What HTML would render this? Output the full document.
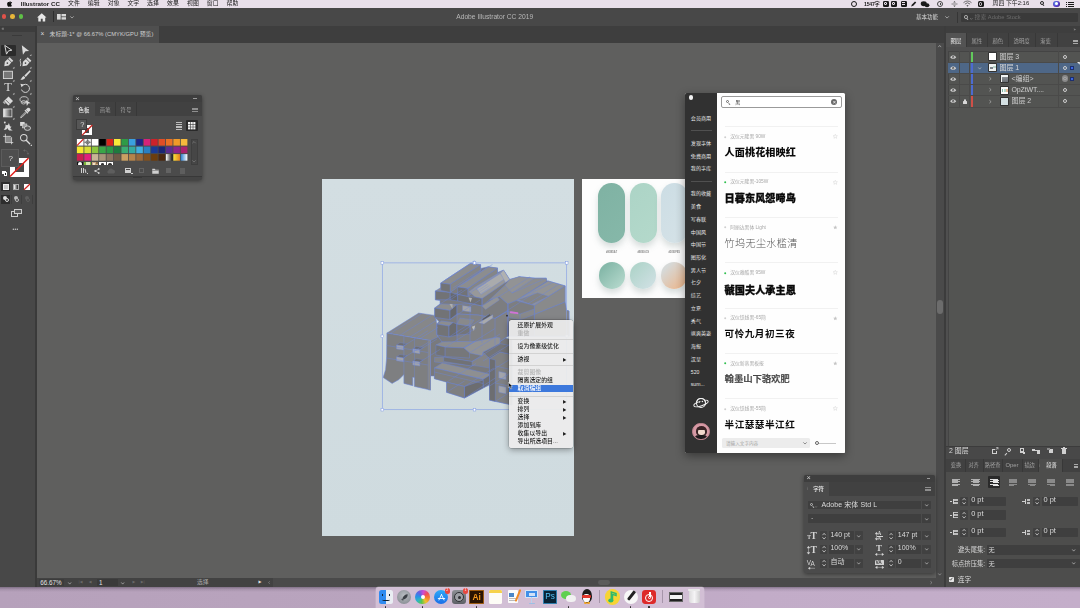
<!DOCTYPE html>
<html lang="zh"><head><meta charset="utf-8"><title>Adobe Illustrator CC 2019</title>
<style>
*{box-sizing:border-box;margin:0;padding:0}
html,body{width:1080px;height:608px;overflow:hidden;background:#5f5f5e}
body{position:relative;font-family:"Liberation Sans","Noto Sans CJK SC",sans-serif;color:#ddd;font-size:6px;line-height:1}
#root{position:absolute;left:0;top:0;width:1080px;height:608px;overflow:hidden;filter:blur(0.5px)}
.a{position:absolute}
.t{position:absolute;white-space:nowrap}
svg{position:absolute;overflow:visible}
</style></head><body><div id="root">

<!-- s_frame -->
<div class="a" style="left:36px;top:42.6px;width:900px;height:536px;background:#5f5f5e;"></div>
<div class="a" style="left:322px;top:179px;width:252px;height:357px;background:linear-gradient(180deg,#d3dee2,#cfdbdf);"></div>
<div class="a" style="left:0px;top:587px;width:1080px;height:21px;background:linear-gradient(90deg,#b6a1bb,#b9a4be 35%,#c2acc8 70%,#c4aeca);"></div>
<div class="a" style="left:0px;top:587px;width:1080px;height:5px;background:linear-gradient(180deg,rgba(40,30,48,.38),rgba(40,30,48,.12) 45%,rgba(40,30,48,0));"></div>
<div class="a" style="left:0px;top:0px;width:1080px;height:7.6px;background:#e9e0ea;"></div>
<svg class="a" style="left:6.5px;top:0.6px" width="5" height="6" viewBox="0 0 20 24"><path fill="#111" d="M14.5 0c.2 1.500-.5 3-1.400 4-.9 1.100-2.400 1.900-3.800 1.800-.2-1.500.6-3 1.400-3.900C11.600.8 13.200.1 14.500 0zM19 8.200c-.2.100-2.500 1.500-2.500 4.400 0 3.400 3 4.600 3.100 4.600 0 .1-.5 1.700-1.600 3.300-1 1.400-2 2.800-3.600 2.800s-2-.9-3.800-.9c-1.700 0-2.400 1-3.800 1-1.500 0-2.500-1.300-3.700-2.900C1.700 18.400.5 15.100.5 12c0-5 3.300-7.600 6.400-7.600 1.700 0 3.100 1.100 4.100 1.100 1 0 2.600-1.200 4.500-1.200.7 0 3.300.1 5 2.500z"/></svg>
<div class="t" style="left:20.7px;top:0.28px;font-size:6.2px;line-height:7.44px;color:#1a1a1a;font-weight:700;">Illustrator CC</div>
<div class="t" style="left:68px;top:0.36px;font-size:5.9px;line-height:7.08px;color:#1a1a1a;">文件</div>
<div class="t" style="left:87.8px;top:0.36px;font-size:5.9px;line-height:7.08px;color:#1a1a1a;">编辑</div>
<div class="t" style="left:107.8px;top:0.36px;font-size:5.9px;line-height:7.08px;color:#1a1a1a;">对象</div>
<div class="t" style="left:127.4px;top:0.36px;font-size:5.9px;line-height:7.08px;color:#1a1a1a;">文字</div>
<div class="t" style="left:147px;top:0.36px;font-size:5.9px;line-height:7.08px;color:#1a1a1a;">选择</div>
<div class="t" style="left:167px;top:0.36px;font-size:5.9px;line-height:7.08px;color:#1a1a1a;">效果</div>
<div class="t" style="left:187px;top:0.36px;font-size:5.9px;line-height:7.08px;color:#1a1a1a;">视图</div>
<div class="t" style="left:206.8px;top:0.36px;font-size:5.9px;line-height:7.08px;color:#1a1a1a;">窗口</div>
<div class="t" style="left:226.6px;top:0.36px;font-size:5.9px;line-height:7.08px;color:#1a1a1a;">帮助</div>
<div class="a" style="left:850.5px;top:0.9px;width:6px;height:6px;border-radius:50%;border:1.6px solid #1a1a1a"></div>
<div class="t" style="left:864px;top:0.88px;font-size:5.2px;line-height:6.24px;color:#1a1a1a;font-weight:700;letter-spacing:-0.25px">1547字</div>
<div class="a" style="left:882.6px;top:0.8px;width:6px;height:6.2px;background:#1a1a1a;border-radius:1.3px"><div class="a" style="left:1.7px;top:1.5px;width:2.6px;height:3.2px;border:0.8px solid #e9e0ea;border-radius:1px"></div></div>
<div class="a" style="left:890.6px;top:0.8px;width:6px;height:6.2px;background:#1a1a1a;border-radius:1.3px"><div class="a" style="left:1.7px;top:1.5px;width:2.6px;height:3.2px;border:0.8px solid #e9e0ea;border-radius:1px"></div></div>
<div class="a" style="left:900.5px;top:0.8px;width:6px;height:6.2px;background:#1a1a1a;border-radius:1.3px"><div class="a" style="left:1.2px;top:1.4px;width:3.6px;height:1px;background:#e9e0ea"></div><div class="a" style="left:1.2px;top:3.4px;width:3.6px;height:1px;background:#e9e0ea"></div></div>
<svg class="a" style="left:910px;top:0.8px" width="7" height="6" viewBox="0 0 14 12"><path d="M2 11 L4 7 L10 1 L12.500 3 L6.500 9.500z" fill="#1a1a1a"/></svg>
<svg class="a" style="left:920px;top:0.6px" width="10" height="7" viewBox="0 0 20 14"><ellipse cx="7.500" cy="5.500" rx="6" ry="4.800" fill="#1a1a1a"/><ellipse cx="14" cy="8.500" rx="4.800" ry="3.800" fill="#1a1a1a"/></svg>
<div class="a" style="left:936.8px;top:0.9px;width:6.2px;height:6.2px;border-radius:50%;border:0.9px solid #444"><div class="a" style="left:1.9px;top:0.7px;width:0.8px;height:2.2px;background:#444"></div><div class="a" style="left:1.9px;top:2.4px;width:1.8px;height:0.8px;background:#444"></div></div>
<svg class="a" style="left:951px;top:0.8px" width="7" height="6" viewBox="0 0 14 12"><path d="M7 0 L9.500 3 H4.500z M7 12 L4.500 9 H9.500z" fill="#555"/><rect x="1" y="5.300" width="12" height="1.400" fill="#555"/></svg>
<svg class="a" style="left:962.500px;top:1px" width="9" height="6" viewBox="0 0 18 12"><path d="M9 11.500 L6.800 9 A3.200 3.200 0 0 1 11.200 9z" fill="#555"/><path d="M3.800 6.200 A7.300 7.300 0 0 1 14.200 6.200" fill="none" stroke="#555" stroke-width="1.700"/><path d="M1 3.400 A11.200 11.200 0 0 1 17 3.400" fill="none" stroke="#555" stroke-width="1.700"/></svg>
<div class="a" style="left:977.8px;top:0.8px;width:6.4px;height:6.2px;background:#1a1a1a;border-radius:1.5px"><div class="a" style="left:1.7px;top:1.3px;width:3px;height:3.600px;border:0.9px solid #e9e0ea;border-radius:1.5px"></div></div>
<div class="t" style="left:992.5px;top:0.46px;font-size:5.9px;line-height:7.08px;color:#1a1a1a;">周四 下午2:16</div>
<div class="a" style="left:1039.5px;top:1px;width:4.2px;height:4.2px;border-radius:50%;border:0.9px solid #222"></div>
<div class="a" style="left:1043px;top:4.3px;width:2.4px;height:0.9px;background:#222;transform:rotate(45deg);transform-origin:0 0"></div>
<div class="a" style="left:1053.3px;top:0.6px;width:6.6px;height:6.6px;background:radial-gradient(circle at 40% 40%,#4fb4f0,#5b36c9 55%,#1c1442);border-radius:50%"><div class="a" style="left:1.8px;top:1.8px;width:3px;height:3px;border-radius:50%;background:#fff"></div></div>
<div class="a" style="left:1067.6px;top:1.5px;width:6.4px;height:0.9px;background:#1a1a1a;"></div>
<div class="a" style="left:1065.6px;top:1.5px;width:1px;height:0.9px;background:#1a1a1a;"></div>
<div class="a" style="left:1067.6px;top:3.5px;width:6.4px;height:0.9px;background:#1a1a1a;"></div>
<div class="a" style="left:1065.6px;top:3.5px;width:1px;height:0.9px;background:#1a1a1a;"></div>
<div class="a" style="left:1067.6px;top:5.5px;width:6.4px;height:0.9px;background:#1a1a1a;"></div>
<div class="a" style="left:1065.6px;top:5.5px;width:1px;height:0.9px;background:#1a1a1a;"></div>
<div class="a" style="left:0px;top:7.6px;width:1080px;height:18.6px;background:#484848;"></div>
<div class="a" style="left:1.7999999999999998px;top:14px;width:4.6px;height:4.6px;background:#e0524a;border-radius:50%"></div>
<div class="a" style="left:10.100000000000001px;top:14px;width:4.6px;height:4.6px;background:#e8b63a;border-radius:50%"></div>
<div class="a" style="left:18.7px;top:14px;width:4.6px;height:4.6px;background:#5fc047;border-radius:50%"></div>
<svg class="a" style="left:37px;top:13.200px" width="9.500" height="8.500" viewBox="0 0 19 17"><path d="M9.500 0.500 L0 9 H2.600 V17 H7.600 V11.500 H11.400 V17 H16.400 V9 H19z" fill="#e6e6e6"/></svg>
<div class="a" style="left:53.3px;top:11px;width:0.6px;height:11px;background:#2e2e2e;"></div>
<svg class="a" style="left:57px;top:14.200px" width="9" height="5.600" viewBox="0 0 18 11.200"><rect x="0" y="0" width="7.400" height="11.200" fill="#d8d8d8"/><rect x="9" y="0" width="9" height="4.800" fill="#d8d8d8"/><rect x="9" y="6.400" width="9" height="4.800" fill="#d8d8d8"/></svg>
<svg class="a" style="left:70.300px;top:15.600px" width="4" height="2.600" viewBox="0 0 8 5"><path d="M0.600 0.600 L4 4 L7.400 0.600" fill="none" stroke="#ccc" stroke-width="1.300"/></svg>
<div class="t" style="left:494.7px;top:13.18px;font-size:6.7px;line-height:8.04px;color:#b8b8b8;transform:translateX(-50%);">Adobe Illustrator CC 2019</div>
<div class="t" style="left:916px;top:13.9px;font-size:5.5px;line-height:6.6px;color:#d8d8d8;">基本功能</div>
<svg class="a" style="left:944.500px;top:16.200px" width="4.200" height="2.600" viewBox="0 0 8 5"><path d="M0.600 0.600 L4 4 L7.400 0.600" fill="none" stroke="#ccc" stroke-width="1.300"/></svg>
<div class="a" style="left:956.6px;top:11.5px;width:0.6px;height:11px;background:#363636;"></div>
<div class="a" style="left:961px;top:13.2px;width:117.4px;height:8.8px;background:#3a3a3a;border-radius:1px"></div>
<div class="a" style="left:964.2px;top:15.2px;width:3.6px;height:3.6px;border-radius:50%;border:0.8px solid #bbb"></div>
<div class="a" style="left:967.2px;top:18.2px;width:2.2px;height:0.8px;background:#bbb;transform:rotate(45deg);transform-origin:0 0"></div>
<svg class="a" style="left:970px;top:17.600px" width="2.600" height="1.800" viewBox="0 0 8 5"><path d="M0.600 0.600 L4 4 L7.400 0.600" fill="none" stroke="#aaa" stroke-width="1.500"/></svg>
<div class="t" style="left:974.6px;top:13.92px;font-size:5.8px;line-height:6.96px;color:#6c6c6c;">搜索 Adobe Stock</div>
<div class="a" style="left:0px;top:26.2px;width:946px;height:16.4px;background:#3e3e3e;"></div>
<div class="a" style="left:37px;top:26.2px;width:121.5px;height:16.4px;background:#4f4f4f;"></div>
<div class="t" style="left:40.6px;top:30.44px;font-size:6.6px;line-height:7.92px;color:#ddd;">×</div>
<div class="t" style="left:49.6px;top:31.12px;font-size:5.8px;line-height:6.96px;color:#cfcfcf;letter-spacing:0.02px">未标题-1* @ 66.67% (CMYK/GPU 预览)</div>
<!-- s_tools -->
<div class="a" style="left:0px;top:26.2px;width:36.4px;height:560.6px;background:#484848;"></div>
<div class="a" style="left:35.4px;top:26.2px;width:1.2px;height:560.6px;background:#3a3a3a;"></div>
<div class="a" style="left:0px;top:26.2px;width:35.4px;height:6px;background:#3d3d3d;"></div>
<div class="t" style="left:1.6px;top:26.44px;font-size:4.6px;line-height:5.52px;color:#aaa;letter-spacing:-0.6px">‹‹</div>
<div class="a" style="left:11.8px;top:35.4px;width:10px;height:1px;background:#3a3a3a;"></div>
<div class="a" style="left:1px;top:44.6px;width:14.8px;height:11px;background:#2b2b2b;border-radius:1px"></div>
<svg class="a" style="left:2.1000000000000005px;top:43.8px" width="12.4" height="12.4" viewBox="0 0 22 22"><path d="M5 2.500 L17.500 11 L11.500 12.200 L8 18z" fill="none" stroke="#dadada" stroke-width="1.700" stroke-linejoin="round"/></svg>
<svg class="a" style="left:19.0px;top:43.8px" width="12.4" height="12.4" viewBox="0 0 22 22"><path d="M5 2 L18 12.500 L11.500 13 L7 19z" fill="#dadada"/><path d="M22 21 h-3 l3 -3z" fill="#ddd"/></svg>
<svg class="a" style="left:2.1000000000000005px;top:56.4px" width="12.4" height="12.4" viewBox="0 0 22 22"><path d="M13.500 2 L20 8.500 L17.500 11 L11 4.500z" fill="#dadada"/><path d="M10.300 5.500 L16.500 11.700 L12 17 L4 18 L5 10z" fill="#dadada"/><circle cx="9.500" cy="12.500" r="1.500" fill="#484848"/><path d="M22 22 h-3 l3 -3z" fill="#ddd"/></svg>
<svg class="a" style="left:19.0px;top:56.4px" width="12.4" height="12.4" viewBox="0 0 22 22"><g transform="translate(2,0)"><path d="M13.500 2 L20 8.500 L17.500 11 L11 4.500z" fill="#dadada"/><path d="M10.300 5.500 L16.500 11.700 L12 17 L4 18 L5 10z" fill="#dadada"/><circle cx="9.500" cy="12.500" r="1.500" fill="#484848"/></g><path d="M3 5 C0 9 5 12 2.500 18" fill="none" stroke="#dadada" stroke-width="1.500"/><path d="M22 22 h-3 l3 -3z" fill="#ddd"/></svg>
<svg class="a" style="left:2.1000000000000005px;top:69.1px" width="12.4" height="12.4" viewBox="0 0 22 22"><rect x="2.500" y="4" width="16" height="13" fill="#777" stroke="#dadada" stroke-width="1.600"/><path d="M22 22 h-3 l3 -3z" fill="#ddd"/></svg>
<svg class="a" style="left:19.0px;top:69.1px" width="12.4" height="12.4" viewBox="0 0 22 22"><path d="M19 2 L21 4 L12 14 L9.500 11.500z" fill="#dadada"/><path d="M8.500 12.500 L11 15 C9.500 19 5 19.500 2.500 19 C5 17.500 5 14 8.500 12.500z" fill="#dadada"/><path d="M22 22 h-3 l3 -3z" fill="#ddd"/></svg>
<div class="t" style="left:8.0px;top:80.4px;font-size:12.5px;line-height:15.0px;color:#dadada;transform:translateX(-50%);font-family:'Liberation Serif',serif;font-weight:400">T</div>
<svg class="a" style="left:2.1000000000000005px;top:81.89999999999999px" width="12.4" height="12.4" viewBox="0 0 22 22"><path d="M22 22 h-3 l3 -3z" fill="#ddd"/></svg>
<svg class="a" style="left:19.0px;top:81.89999999999999px" width="12.4" height="12.4" viewBox="0 0 22 22"><path d="M6 6.500 A7.200 7.200 0 1 1 4.500 13.500" fill="none" stroke="#dadada" stroke-width="1.700"/><path d="M2.500 3 L9 4.500 L4.500 9.500z" fill="#dadada"/><path d="M22 22 h-3 l3 -3z" fill="#ddd"/></svg>
<svg class="a" style="left:2.1000000000000005px;top:94.8px" width="12.4" height="12.4" viewBox="0 0 22 22"><path d="M11.500 2.500 L19.500 10.500 L11.500 18.500 L3.500 10.500z" fill="#dadada"/><path d="M3.500 10.500 L7 14 L4.700 16.300 L1.200 12.800z" fill="#aaa"/><path d="M6.500 8.500 L13.500 15.500" stroke="#484848" stroke-width="1.200"/><path d="M22 22 h-3 l3 -3z" fill="#ddd"/></svg>
<svg class="a" style="left:19.0px;top:94.8px" width="12.4" height="12.4" viewBox="0 0 22 22"><ellipse cx="9" cy="8" rx="7.200" ry="5" fill="none" stroke="#dadada" stroke-width="1.500"/><ellipse cx="8" cy="13" rx="4" ry="3" fill="none" stroke="#dadada" stroke-width="1.400"/><path d="M12 9 L21 14.500 L16.500 15.200 L14 19.500z" fill="#dadada"/></svg>
<svg class="a" style="left:2.1000000000000005px;top:107.3px" width="12.4" height="12.4" viewBox="0 0 22 22"><defs><linearGradient id="tg"><stop offset="0" stop-color="#f4f4f4"/><stop offset="1" stop-color="#3a3a3a"/></linearGradient></defs><rect x="2.500" y="3.500" width="15" height="14" fill="url(#tg)" stroke="#dadada" stroke-width="1.500"/><path d="M22 22 h-3 l3 -3z" fill="#ddd"/></svg>
<svg class="a" style="left:19.0px;top:107.3px" width="12.4" height="12.4" viewBox="0 0 22 22"><path d="M15.500 1.500 C18 0 21.500 3.500 20 6 L16.500 9.500 L12 5z" fill="#dadada"/><path d="M10.500 5.500 L16 11" stroke="#dadada" stroke-width="2.200"/><path d="M12.500 8 L4 16.500 L3 19 L5.500 18 L14 9.500" fill="none" stroke="#dadada" stroke-width="1.500"/></svg>
<svg class="a" style="left:2.1000000000000005px;top:120.0px" width="12.4" height="12.4" viewBox="0 0 22 22"><path d="M3 17 C6 15 7 11 6 8 C9 11 12 9 12 5 C14 9 13 12 17 12 C14 14 14 17 19 18 C13 20 10 17 10 14 C8 17 6 18 3 17z" fill="#dadada"/><circle cx="5" cy="4.500" r="1.700" fill="#dadada"/></svg>
<svg class="a" style="left:19.0px;top:120.0px" width="12.4" height="12.4" viewBox="0 0 22 22"><rect x="2" y="3.500" width="8" height="7" fill="#dadada"/><rect x="6" y="7" width="8" height="7" fill="#9a9a9a" stroke="#dadada" stroke-width="1"/><ellipse cx="15" cy="14.500" rx="5.500" ry="4" fill="#5a5a5a" stroke="#dadada" stroke-width="1.500"/></svg>
<svg class="a" style="left:2.1000000000000005px;top:132.60000000000002px" width="12.4" height="12.4" viewBox="0 0 22 22"><path d="M6 1.500 V17 H20" fill="none" stroke="#dadada" stroke-width="1.500"/><path d="M2 6 H15 L17 8 V20" fill="none" stroke="#dadada" stroke-width="1.500"/><path d="M7 7 H14.500 L16 8.500 V16 H7z" fill="#8a8a8a"/></svg>
<svg class="a" style="left:19.0px;top:132.60000000000002px" width="12.4" height="12.4" viewBox="0 0 22 22"><circle cx="8.500" cy="8.500" r="5.800" fill="none" stroke="#dadada" stroke-width="1.800"/><path d="M12.800 12.800 L19 19" stroke="#dadada" stroke-width="2.400" stroke-linecap="round"/><path d="M23 23 h-3 l3 -3z" fill="#ddd"/></svg>
<div class="a" style="left:10.4px;top:158.2px;width:18.6px;height:18.6px;background:#fff;"><div class="a" style="left:5px;top:5px;width:8.600px;height:8.600px;background:#484848"></div></div>
<svg class="a" style="left:10.400px;top:158.200px" width="18.600" height="18.600" viewBox="0 0 18.600 18.600"><path d="M0 18.600 L18.600 0" stroke="#e0211d" stroke-width="1.500"/></svg>
<div class="a" style="left:1.2px;top:149.4px;width:18px;height:18px;background:#4e4e4e;border:0.6px solid #5c5c5c"><div class="t" style="left:6.400px;top:4.600px;font-size:8px;color:#ddd">?</div></div>
<svg class="a" style="left:23px;top:149px" width="6" height="6" viewBox="0 0 12 12"><path d="M2 3 C7 2 10 5 10 10" fill="none" stroke="#666" stroke-width="1.200"/><path d="M0 3 L4 0.500 V5.500z M10 12 L7.500 8 H12.500z" fill="#666"/></svg>
<div class="a" style="left:2.2px;top:170.6px;width:3.4px;height:3.4px;background:#fff;"></div>
<div class="a" style="left:3.8px;top:172.2px;width:3.6px;height:3.6px;background:#222;border:0.6px solid #fff"></div>
<div class="a" style="left:1.2px;top:182.2px;width:9px;height:9px;background:#2d2d2d;"></div>
<div class="a" style="left:2.8px;top:183.8px;width:5.8px;height:5.8px;background:#c8c8c8;border:0.5px solid #eee"></div>
<div class="a" style="left:13.4px;top:183.8px;width:5.8px;height:5.8px;background:linear-gradient(90deg,#fff,#222);border:0.5px solid #aaa"></div>
<div class="a" style="left:23.8px;top:183.8px;width:6px;height:5.8px;background:#fff;"></div>
<svg class="a" style="left:23.800px;top:183.800px" width="6" height="5.800" viewBox="0 0 6 5.800"><path d="M0 5.800 L6 0" stroke="#d0211d" stroke-width="1.200"/></svg>
<div class="a" style="left:1.2px;top:194.6px;width:9px;height:9px;background:#2d2d2d;"></div>
<div class="a" style="left:3px;top:196.4px;width:4px;height:4px;border-radius:50%;background:#ddd"></div>
<div class="a" style="left:4.6px;top:198px;width:4px;height:4px;border-radius:50%;border:0.7px solid #ddd;background:#2d2d2d"></div>
<div class="a" style="left:13.8px;top:196.4px;width:4px;height:4px;border-radius:50%;background:#bbb"></div>
<div class="a" style="left:15.4px;top:198px;width:4px;height:4px;border-radius:50%;border:0.7px solid #bbb;background:#484848"></div>
<div class="a" style="left:24.6px;top:196.4px;width:4px;height:4px;border-radius:50%;background:#5e5e5e"></div>
<div class="a" style="left:26.200000000000003px;top:198px;width:4px;height:4px;border-radius:50%;border:0.7px solid #5e5e5e;background:#484848"></div>
<div class="a" style="left:10.8px;top:194.6px;width:0.5px;height:9px;background:#3e3e3e;"></div>
<div class="a" style="left:21.4px;top:194.6px;width:0.5px;height:9px;background:#3e3e3e;"></div>
<div class="a" style="left:32px;top:194.6px;width:0.5px;height:9px;background:#3e3e3e;"></div>
<div class="a" style="left:10.6px;top:211.2px;width:7.6px;height:5.6px;background:#484848;border:0.8px solid #ccc"></div>
<div class="a" style="left:14px;top:208.6px;width:8px;height:5.8px;background:#5a5a5a;border:0.8px solid #ccc"></div>
<div class="t" style="left:15.5px;top:226.84px;font-size:4.6px;line-height:5.52px;color:#d0d0d0;transform:translateX(-50%);letter-spacing:0.4px">•••</div>
<!-- s_swatch -->
<div class="a" style="left:73.2px;top:95.2px;width:128.8px;height:85.2px;background:#4b4b4b;border-radius:2px;box-shadow:0 1px 4px rgba(0,0,0,.45)"></div>
<div class="a" style="left:73.2px;top:95.2px;width:128.8px;height:6.8px;background:#3e3e3e;border-radius:2px 2px 0 0"></div>
<div class="t" style="left:75.2px;top:93.84px;font-size:7.6px;line-height:9.12px;color:#cfcfcf;">×</div>
<div class="a" style="left:193.4px;top:98.2px;width:3.4px;height:0.9px;background:#9a9a9a;"></div>
<div class="a" style="left:73.2px;top:102px;width:128.8px;height:13.8px;background:#414141;"></div>
<div class="a" style="left:73.2px;top:102px;width:21.4px;height:13.8px;background:#4b4b4b;"></div>
<div class="a" style="left:115.4px;top:102px;width:0.6px;height:13.8px;background:#383838;"></div>
<div class="a" style="left:136px;top:102px;width:0.6px;height:13.8px;background:#383838;"></div>
<div class="t" style="left:84px;top:106.76px;font-size:5.4px;line-height:6.48px;color:#e8e8e8;font-weight:500;transform:translateX(-50%);">色板</div>
<div class="t" style="left:105.2px;top:106.76px;font-size:5.4px;line-height:6.48px;color:#9c9c9c;transform:translateX(-50%);">画笔</div>
<div class="t" style="left:126px;top:106.76px;font-size:5.4px;line-height:6.48px;color:#9c9c9c;transform:translateX(-50%);">符号</div>
<div class="a" style="left:192.4px;top:107.6px;width:5.2px;height:0.8px;background:#8e8e8e;"></div>
<div class="a" style="left:192.4px;top:109.1px;width:5.2px;height:0.8px;background:#8e8e8e;"></div>
<div class="a" style="left:192.4px;top:110.6px;width:5.2px;height:0.8px;background:#8e8e8e;"></div>
<div class="a" style="left:81.8px;top:125px;width:10.4px;height:10.4px;background:#fff;"><div class="a" style="left:2.800px;top:2.800px;width:4.800px;height:4.800px;background:#4b4b4b"></div></div>
<svg class="a" style="left:81.800px;top:125px" width="10.400" height="10.400" viewBox="0 0 10.400 10.400"><path d="M0 10.400 L10.400 0" stroke="#c8221c" stroke-width="1.300"/></svg>
<div class="a" style="left:76.4px;top:119.4px;width:10.6px;height:10.2px;background:#565656;border:0.6px solid #3c3c3c"><div class="t" style="left:2.800px;top:0.800px;font-size:7.400px;color:#ddd">?</div></div>
<div class="a" style="left:176px;top:122.4px;width:6.4px;height:0.9px;background:#bdbdbd;"></div>
<div class="a" style="left:176px;top:124.0px;width:6.4px;height:0.9px;background:#bdbdbd;"></div>
<div class="a" style="left:176px;top:125.60000000000001px;width:6.4px;height:0.9px;background:#bdbdbd;"></div>
<div class="a" style="left:176px;top:127.2px;width:6.4px;height:0.9px;background:#bdbdbd;"></div>
<div class="a" style="left:176px;top:128.8px;width:6.4px;height:0.9px;background:#bdbdbd;"></div>
<div class="a" style="left:186px;top:120.4px;width:11.6px;height:10.8px;background:#2a2a2a;border-radius:1px"></div>
<svg class="a" style="left:188.200px;top:122.200px" width="7.400" height="7.400" viewBox="0 0 14 14"><rect x="0" y="0" width="4" height="4" fill="#f2f2f2"/><rect x="5" y="0" width="4" height="4" fill="#f2f2f2"/><rect x="10" y="0" width="4" height="4" fill="#f2f2f2"/><rect x="0" y="5" width="4" height="4" fill="#f2f2f2"/><rect x="5" y="5" width="4" height="4" fill="#f2f2f2"/><rect x="10" y="5" width="4" height="4" fill="#f2f2f2"/><rect x="0" y="10" width="4" height="4" fill="#f2f2f2"/><rect x="5" y="10" width="4" height="4" fill="#f2f2f2"/><rect x="10" y="10" width="4" height="4" fill="#f2f2f2"/></svg>
<svg class="a" style="left:0;top:0" width="1080" height="608" viewBox="0 0 1080 608"><defs><linearGradient id="sg1"><stop offset="0" stop-color="#fff"/><stop offset="1" stop-color="#111"/></linearGradient><linearGradient id="sg2"><stop offset="0" stop-color="#f8e23a"/><stop offset="1" stop-color="#e8821e"/></linearGradient><linearGradient id="sg3"><stop offset="0" stop-color="#2b7fd0"/><stop offset="1" stop-color="#fff"/></linearGradient></defs><rect x="76.9" y="139" width="6.6" height="6.6" fill="#fff"/><path d="M76.9 145.6 L83.5 139" stroke="#d0211d" stroke-width="1.100"/><rect x="84.32" y="139" width="6.6" height="6.6" fill="#f2f2f2"/><circle cx="87.62" cy="142.3" r="1.700" fill="none" stroke="#555" stroke-width="0.800"/><path d="M87.62 139 V145.6 M84.32 142.3 H90.91999999999999" stroke="#555" stroke-width="0.700"/><rect x="91.74" y="139" width="6.6" height="6.6" fill="#ffffff"/><rect x="99.16" y="139" width="6.6" height="6.6" fill="#000000"/><rect x="106.58" y="139" width="6.6" height="6.6" fill="#d9261c"/><rect x="114.0" y="139" width="6.6" height="6.6" fill="#f8ea3a"/><rect x="121.42" y="139" width="6.6" height="6.6" fill="#2e9b47"/><rect x="128.84" y="139" width="6.6" height="6.6" fill="#3a9fe0"/><rect x="136.26" y="139" width="6.6" height="6.6" fill="#1c2587"/><rect x="143.68" y="139" width="6.6" height="6.6" fill="#d4237a"/><rect x="151.1" y="139" width="6.6" height="6.6" fill="#cc2229"/><rect x="158.52" y="139" width="6.6" height="6.6" fill="#e04e26"/><rect x="165.94" y="139" width="6.6" height="6.6" fill="#ea7125"/><rect x="173.36" y="139" width="6.6" height="6.6" fill="#f09a28"/><rect x="180.78" y="139" width="6.6" height="6.6" fill="#f5b83c"/><rect x="76.9" y="146.6" width="6.6" height="6.6" fill="#f5e830"/><rect x="84.32" y="146.6" width="6.6" height="6.6" fill="#d8dc34"/><rect x="91.74" y="146.6" width="6.6" height="6.6" fill="#8cc63f"/><rect x="99.16" y="146.6" width="6.6" height="6.6" fill="#3aa648"/><rect x="106.58" y="146.6" width="6.6" height="6.6" fill="#2c9845"/><rect x="114.0" y="146.6" width="6.6" height="6.6" fill="#1f7a3e"/><rect x="121.42" y="146.6" width="6.6" height="6.6" fill="#3aad73"/><rect x="128.84" y="146.6" width="6.6" height="6.6" fill="#35a9a0"/><rect x="136.26" y="146.6" width="6.6" height="6.6" fill="#42aee0"/><rect x="143.68" y="146.6" width="6.6" height="6.6" fill="#2a7fc2"/><rect x="151.1" y="146.6" width="6.6" height="6.6" fill="#1a3a93"/><rect x="158.52" y="146.6" width="6.6" height="6.6" fill="#1b2674"/><rect x="165.94" y="146.6" width="6.6" height="6.6" fill="#5b2d8e"/><rect x="173.36" y="146.6" width="6.6" height="6.6" fill="#8d2489"/><rect x="180.78" y="146.6" width="6.6" height="6.6" fill="#a8226e"/><rect x="76.9" y="154.1" width="6.6" height="6.6" fill="#c9204f"/><rect x="84.32" y="154.1" width="6.6" height="6.6" fill="#e0207c"/><rect x="91.74" y="154.1" width="6.6" height="6.6" fill="#c8b596"/><rect x="99.16" y="154.1" width="6.6" height="6.6" fill="#a89579"/><rect x="106.58" y="154.1" width="6.6" height="6.6" fill="#8a7560"/><rect x="114.0" y="154.1" width="6.6" height="6.6" fill="#6e5a47"/><rect x="121.42" y="154.1" width="6.6" height="6.6" fill="#c9a063"/><rect x="128.84" y="154.1" width="6.6" height="6.6" fill="#b5834a"/><rect x="136.26" y="154.1" width="6.6" height="6.6" fill="#99683a"/><rect x="143.68" y="154.1" width="6.6" height="6.6" fill="#81501f"/><rect x="151.1" y="154.1" width="6.6" height="6.6" fill="#6b3d0d"/><rect x="158.52" y="154.1" width="6.6" height="6.6" fill="#4a2810"/><rect x="165.94" y="154.1" width="6.6" height="6.6" fill="url(#sg1)"/><rect x="173.36" y="154.1" width="6.6" height="6.6" fill="url(#sg2)"/><rect x="180.78" y="154.1" width="6.6" height="6.6" fill="url(#sg3)"/></svg>
<div class="a" style="left:76.9px;top:161.6px;width:6.6px;height:3.4px;background:#111;overflow:hidden"><div class="a" style="left:1.400px;top:0.800px;width:4px;height:4px;border-radius:50%;background:#fff"></div></div>
<div class="a" style="left:84.32px;top:161.6px;width:6.6px;height:3.4px;background:#7db53c;overflow:hidden"><div class="a" style="left:1.400px;top:0.900px;width:4px;height:3px;background:#d8e8b0"></div></div>
<div class="a" style="left:91.74px;top:161.6px;width:6.6px;height:3.4px;background:#c8a780;overflow:hidden"><div class="a" style="left:1px;top:1px;width:2px;height:2px;background:#efe0c8"></div><div class="a" style="left:4px;top:0.300px;width:2px;height:2px;background:#8a6a48"></div></div>
<div class="a" style="left:99.16px;top:161.6px;width:6.6px;height:3.4px;background:#fff;overflow:hidden"><div class="a" style="left:1.700px;top:1.200px;width:3.300px;height:3px;border-radius:50% 50% 0 0;background:#333"></div></div>
<div class="a" style="left:106.58px;top:161.6px;width:6.6px;height:3.4px;background:#fff;overflow:hidden"><div class="a" style="left:1.700px;top:1.200px;width:3.300px;height:3px;border-radius:50% 50% 0 0;background:#333"></div></div>
<div class="a" style="left:190.6px;top:139px;width:7px;height:26px;background:#464646;border:0.5px solid #3e3e3e"></div>
<svg class="a" style="left:192.200px;top:141px" width="4" height="2.600" viewBox="0 0 8 5"><path d="M0.600 4.400 L4 1 L7.400 4.400" fill="none" stroke="#8a8a8a" stroke-width="1.200"/></svg>
<svg class="a" style="left:192.200px;top:160.400px" width="4" height="2.600" viewBox="0 0 8 5"><path d="M0.600 0.600 L4 4 L7.400 0.600" fill="none" stroke="#8a8a8a" stroke-width="1.200"/></svg>
<div class="a" style="left:80.8px;top:168px;width:1.4px;height:5px;background:#d0d0d0;"></div>
<div class="a" style="left:82.8px;top:168px;width:1.4px;height:5px;background:#d0d0d0;"></div>
<div class="a" style="left:84.6px;top:168.6px;width:1.3px;height:4.4px;background:#d0d0d0;transform:rotate(-14deg)"></div>
<div class="a" style="left:86.8px;top:173px;width:1.2px;height:1.2px;background:#d0d0d0;"></div>
<svg class="a" style="left:94px;top:167.600px" width="6" height="6" viewBox="0 0 12 12"><path d="M9.500 2 L3 6 L9.500 10" fill="none" stroke="#d0d0d0" stroke-width="1.400"/><circle cx="9.500" cy="2" r="1.800" fill="#d0d0d0"/><circle cx="2.500" cy="6" r="1.800" fill="#d0d0d0"/><circle cx="9.500" cy="10" r="1.800" fill="#d0d0d0"/></svg>
<svg class="a" style="left:106px;top:167.600px" width="10" height="6" viewBox="0 0 20 12"><path d="M5 11 A3.500 3.500 0 0 1 5 4.500 A5 5 0 0 1 14 3.500 A4 4 0 0 1 16 11z" fill="#5e5e5e"/></svg>
<div class="a" style="left:125px;top:167.8px;width:5.6px;height:5.4px;background:#d0d0d0;"><div class="a" style="left:0.800px;top:0.800px;width:1.800px;height:1.600px;background:#4b4b4b"></div><div class="a" style="left:3.200px;top:0.800px;width:1.600px;height:1.600px;background:#4b4b4b"></div></div>
<div class="a" style="left:131.4px;top:173px;width:1.2px;height:1.2px;background:#d0d0d0;"></div>
<div class="a" style="left:138.6px;top:168px;width:5px;height:5.4px;border:0.8px solid #636363"></div>
<svg class="a" style="left:151.600px;top:167.600px" width="7" height="6" viewBox="0 0 14 12"><path d="M0.500 1.500 H5.500 L7 3.500 H13.500 V11.500 H0.500z" fill="#d0d0d0"/><path d="M0.500 5 H13.500" stroke="#4b4b4b" stroke-width="0.900"/></svg>
<div class="a" style="left:166.4px;top:168px;width:4.6px;height:5px;background:#636363;"></div>
<div class="a" style="left:180.4px;top:168.8px;width:4.4px;height:4.8px;background:#5e5e5e;"></div>
<div class="a" style="left:179.8px;top:167.6px;width:5.6px;height:0.9px;background:#5e5e5e;"></div>
<div class="a" style="left:73.2px;top:175.6px;width:128.8px;height:4.8px;background:#444;border-radius:0 0 2px 2px;border-top:0.6px solid #383838"></div>
<div class="a" style="left:133px;top:176.6px;width:9px;height:1px;background:#383838;"></div>
<!-- s_art -->
<svg class="a" style="left:0;top:0;filter:blur(0.350px)" width="1080" height="608" viewBox="0 0 1080 608">
<polygon points="386.9,333.1 418.7,313.1 435,315.4 437,324 437,335 442,342 430.5,340.5" fill="#868789" stroke="#6a84dc" stroke-width="0.6" stroke-opacity="0.8" stroke-linejoin="round"/>
<polygon points="430.5,340.5 442,335 500,336 512,340 512,405 489.5,400.1 489.5,385.1 483.1,388 464.5,398 446.6,392.3 446.6,381.5 434.4,378.7 434.4,376 430.5,376" fill="#797a7d" stroke="#6a84dc" stroke-width="0.6" stroke-opacity="0.8" stroke-linejoin="round"/>
<polygon points="435.4,291 440.8,290 440.8,283 470.5,263.4 480.6,264.7 480.6,268.5 488,266.8 497.5,268.1 497.5,272.5 503.5,270.1 509.6,279.5 519,276.8 534.3,278.2 546.2,278.2 546.9,281 548.3,281 565.1,285.9 565.1,302 566.5,310.3 569,311 569,336 508,336 495,345 442,342 437,335 437,324 439,321.5 434.7,317.4 434.7,308 440,304 440,300.5 435.4,299.8" fill="#7b7c7f" stroke="#6a84dc" stroke-width="0.7" stroke-opacity="0.8" stroke-linejoin="round"/>
<polygon points="435.4,291 440.8,287.6 455,288.6 450.2,292.4" fill="#8c8d8f" stroke="#6a84dc" stroke-width="0.6" stroke-opacity="0.8" stroke-linejoin="round"/>
<polygon points="435.4,291 450.2,292.4 450.2,299.8 435.4,299.8" fill="#727376" stroke="#6a84dc" stroke-width="0.6" stroke-opacity="0.8" stroke-linejoin="round"/>
<polygon points="450.2,292.4 457.7,294.4 457.7,301 450.2,299.8" fill="#68696c" stroke="#6a84dc" stroke-width="0.6" stroke-opacity="0.8" stroke-linejoin="round"/>
<polygon points="434.7,308 440.8,303.9 457,304.5 450,310.5" fill="#8c8d8f" stroke="#6a84dc" stroke-width="0.6" stroke-opacity="0.8" stroke-linejoin="round"/>
<polygon points="434.7,308 450,310.5 450,319.5 434.7,317.4" fill="#727376" stroke="#6a84dc" stroke-width="0.6" stroke-opacity="0.8" stroke-linejoin="round"/>
<polygon points="450,310.5 457,304.5 457,314 450,319.5" fill="#67686b" stroke="#6a84dc" stroke-width="0.6" stroke-opacity="0.8" stroke-linejoin="round"/>
<polygon points="437,324 441.5,321 453,322.5 449,326" fill="#8c8d8f" stroke="#6a84dc" stroke-width="0.6" stroke-opacity="0.8" stroke-linejoin="round"/>
<polygon points="437,324 449,326 449,337 437,335" fill="#727376" stroke="#6a84dc" stroke-width="0.6" stroke-opacity="0.8" stroke-linejoin="round"/>
<polygon points="449,326 453,322.5 457,324 457,335 449,337" fill="#6b6c6f" stroke="#6a84dc" stroke-width="0.6" stroke-opacity="0.8" stroke-linejoin="round"/>
<polygon points="440.8,283 470.5,263.4 480.6,264.7 450.2,284.3" fill="#8c8d8f" stroke="#6a84dc" stroke-width="0.6" stroke-opacity="0.8" stroke-linejoin="round"/>
<polygon points="450.2,284.3 480.6,264.7 480.6,270.8 450.2,292.4" fill="#848587" stroke="#6a84dc" stroke-width="0.6" stroke-opacity="0.8" stroke-linejoin="round"/>
<polygon points="440.8,283 450.2,284.3 450.2,292.4 440.8,290.5" fill="#727376" stroke="#6a84dc" stroke-width="0.6" stroke-opacity="0.8" stroke-linejoin="round"/>
<polygon points="457.7,287 488,266.8 497.5,268.1 467.8,288.4" fill="#8c8d8f" stroke="#6a84dc" stroke-width="0.6" stroke-opacity="0.8" stroke-linejoin="round"/>
<polygon points="467.8,288.4 497.5,268.1 497.5,275 467.8,296.5" fill="#848587" stroke="#6a84dc" stroke-width="0.6" stroke-opacity="0.8" stroke-linejoin="round"/>
<polygon points="457.7,287 467.8,288.4 467.8,296.5 457.7,294.4" fill="#727376" stroke="#6a84dc" stroke-width="0.6" stroke-opacity="0.8" stroke-linejoin="round"/>
<polygon points="469.1,291.7 475.2,287 503.5,270.1 509.6,279.5 482,298.5 475.2,297.1" fill="#97989a" stroke="#6a84dc" stroke-width="0.6" stroke-opacity="0.8" stroke-linejoin="round"/>
<polygon points="476.5,288.5 500.5,273.5 504.5,279 481,294.5" fill="#aaabac" stroke="#6a84dc" stroke-width="0.4" stroke-opacity="0.8" stroke-linejoin="round"/>
<line x1="476.0" y1="289.5" x2="486.0" y2="283.0" stroke="#6a84dc" stroke-width="0.35" opacity="0.8"/>
<line x1="477.7" y1="290.8" x2="487.7" y2="284.3" stroke="#6a84dc" stroke-width="0.35" opacity="0.8"/>
<line x1="479.4" y1="292.1" x2="489.4" y2="285.6" stroke="#6a84dc" stroke-width="0.35" opacity="0.8"/>
<line x1="481.1" y1="293.4" x2="491.1" y2="286.9" stroke="#6a84dc" stroke-width="0.35" opacity="0.8"/>
<polygon points="500.5,273.5 503.5,270.1 509.6,279.5 505.5,282.5" fill="#b0b1b1" stroke="#6a84dc" stroke-width="0.4" stroke-opacity="0.8" stroke-linejoin="round"/>
<polygon points="457.7,294.4 467.8,296.5 475.2,297.1 482,298.5 482,306 470,303.5 457.7,301" fill="#717275" stroke="#6a84dc" stroke-width="0.6" stroke-opacity="0.8" stroke-linejoin="round"/>
<polygon points="457,304.5 470,303.5 482,306 489.4,300 499.4,296.4 508,304 508,311 495,318.5 478,315 457,314" fill="#7c7d80" stroke="#6a84dc" stroke-width="0.6" stroke-opacity="0.8" stroke-linejoin="round"/>
<polygon points="462.5,305.5 471,306.8 471,312 462.5,310.7" fill="#a4a5a7" stroke="#6a84dc" stroke-width="0.4" stroke-opacity="0.8" stroke-linejoin="round"/>
<polygon points="468.5,297.5 472,298 470.5,302.5" fill="#b2b3b3"/>
<polygon points="449.5,304 452.5,304 452.5,309" fill="#aeafb0"/>
<polygon points="482,306 497,296.5 499.4,300 485.5,309.5" fill="#939496" stroke="#6a84dc" stroke-width="0.4" stroke-opacity="0.8" stroke-linejoin="round"/>
<polygon points="457,314 478,315 495,318.5 508,311 508,336 495,345 457,341.5" fill="#808184" stroke="#6a84dc" stroke-width="0.6" stroke-opacity="0.8" stroke-linejoin="round"/>
<polygon points="482,319.4 489.4,314 490.7,315.4 483.3,321.2" fill="#5a5c5f"/>
<polygon points="478.6,322.8 492.8,314.7 492.8,318 484,324.1" fill="#a9aaab" stroke="#6a84dc" stroke-width="0.4" stroke-opacity="0.8" stroke-linejoin="round"/>
<polygon points="471.8,326.8 475.2,325.5 473.9,330.9" fill="#bebfbf"/>
<polygon points="457,324 470,326 470,334 457,335" fill="#747578" stroke="#6a84dc" stroke-width="0.5" stroke-opacity="0.8" stroke-linejoin="round"/>
<polygon points="460,318 474,320 470,326 457,324" fill="#88898b" stroke="#6a84dc" stroke-width="0.5" stroke-opacity="0.8" stroke-linejoin="round"/>
<polygon points="489.4,300 505,285.2 519,276.8 534.3,278.2 546.2,278.2 546.9,281 516.2,300.6 508,304 499.4,296.4" fill="#8c8d8f" stroke="#6a84dc" stroke-width="0.6" stroke-opacity="0.8" stroke-linejoin="round"/>
<polygon points="509.6,279.5 519,276.8 534.3,278.2 512,293 505,285.2" fill="#929395" stroke="#6a84dc" stroke-width="0.5" stroke-opacity="0.8" stroke-linejoin="round"/>
<polygon points="516.2,300.6 548.3,281 565.1,285.9 534.3,305.5" fill="#939495" stroke="#6a84dc" stroke-width="0.6" stroke-opacity="0.8" stroke-linejoin="round"/>
<polygon points="518.5,299.8 537.5,292.8 548.5,296.3 531.5,304.6" fill="#838486" stroke="#6a84dc" stroke-width="0.5" stroke-opacity="0.8" stroke-linejoin="round"/>
<polygon points="534.3,305.5 565.1,285.9 565.1,302 534.3,314.5" fill="#898a8b" stroke="#6a84dc" stroke-width="0.6" stroke-opacity="0.8" stroke-linejoin="round"/>
<polygon points="534.3,314.5 565.1,302 566.5,310.3 569,311 569,336 534.3,336" fill="#848587" stroke="#6a84dc" stroke-width="0.6" stroke-opacity="0.8" stroke-linejoin="round"/>
<polygon points="508,304 516.2,300.6 534.3,305.5 534.3,336 508,336" fill="#7d7e80" stroke="#6a84dc" stroke-width="0.6" stroke-opacity="0.8" stroke-linejoin="round"/>
<polygon points="508,311 520,314 534.3,309 534.3,314.5 520,320 508,317" fill="#88898b" stroke="#6a84dc" stroke-width="0.5" stroke-opacity="0.8" stroke-linejoin="round"/>
<polygon points="386.9,333.1 430.5,340.5 430.5,390.1 414.3,386.4 414.3,377.5 412.8,377.3 412.8,385.7 403.9,383.4 403.9,374.6 399,379.5 392.1,383.4 383.2,377.5 385.6,369.5 386.6,358" fill="#7e7f81" stroke="#6a84dc" stroke-width="0.7" stroke-opacity="0.8" stroke-linejoin="round"/>
<polygon points="396.5,345 403.5,346.1 407.0,343.8 400.0,342.7" fill="#6e6f72" stroke="#6a84dc" stroke-width="0.4" stroke-opacity="0.8" stroke-linejoin="round"/>
<polygon points="396.5,345 403.5,346.1 403.5,350 396.5,348.9" fill="#a2a4ab" stroke="#6a84dc" stroke-width="0.5" stroke-opacity="0.8" stroke-linejoin="round"/>
<polygon points="412.8,348.7 419.8,349.8 423.3,347.5 416.3,346.4" fill="#6e6f72" stroke="#6a84dc" stroke-width="0.4" stroke-opacity="0.8" stroke-linejoin="round"/>
<polygon points="412.8,348.7 419.8,349.8 419.8,353.7 412.8,352.59999999999997" fill="#a2a4ab" stroke="#6a84dc" stroke-width="0.5" stroke-opacity="0.8" stroke-linejoin="round"/>
<polygon points="396.5,356.8 403.5,357.90000000000003 407.0,355.6 400.0,354.5" fill="#6e6f72" stroke="#6a84dc" stroke-width="0.4" stroke-opacity="0.8" stroke-linejoin="round"/>
<polygon points="396.5,356.8 403.5,357.90000000000003 403.5,361.8 396.5,360.7" fill="#a2a4ab" stroke="#6a84dc" stroke-width="0.5" stroke-opacity="0.8" stroke-linejoin="round"/>
<polygon points="412.8,361 419.8,362.1 423.3,359.8 416.3,358.7" fill="#6e6f72" stroke="#6a84dc" stroke-width="0.4" stroke-opacity="0.8" stroke-linejoin="round"/>
<polygon points="412.8,361 419.8,362.1 419.8,366 412.8,364.9" fill="#a2a4ab" stroke="#6a84dc" stroke-width="0.5" stroke-opacity="0.8" stroke-linejoin="round"/>
<polygon points="428,340.1 430.5,340.5 430.5,390.1 428,389.6" fill="#87888b" stroke="#6a84dc" stroke-width="0.3" stroke-opacity="0.8" stroke-linejoin="round"/>
<polygon points="442,342 457,341.5 475.2,341.5 463.8,347.9 445.2,347.2 435.9,345" fill="#8c8d8f" stroke="#6a84dc" stroke-width="0.5" stroke-opacity="0.8" stroke-linejoin="round"/>
<polygon points="463.8,347.9 475.2,341.5 496.7,337.2 500,338 500,343.6 483.1,352.2 482.4,355.8 469.5,352.9" fill="#929395" stroke="#6a84dc" stroke-width="0.6" stroke-opacity="0.8" stroke-linejoin="round"/>
<polygon points="435.9,345 445.2,347.2 445.2,356.5 435.9,355" fill="#727376" stroke="#6a84dc" stroke-width="0.5" stroke-opacity="0.8" stroke-linejoin="round"/>
<polygon points="445.2,347.2 463.8,347.9 469.5,352.9 469.5,358 445.2,356.5" fill="#76777a" stroke="#6a84dc" stroke-width="0.5" stroke-opacity="0.8" stroke-linejoin="round"/>
<polygon points="434.4,357.5 443.7,357 472,361.5 482.4,355.8 483.1,352.2 489.5,358.6 489.5,368 478,366 434.4,362" fill="#838487" stroke="#6a84dc" stroke-width="0.5" stroke-opacity="0.8" stroke-linejoin="round"/>
<polygon points="443.7,357 472,361.5 472,366 443.7,361.5" fill="#717275" stroke="#6a84dc" stroke-width="0.5" stroke-opacity="0.8" stroke-linejoin="round"/>
<polygon points="434.4,367.9 442.3,362.9 491,374.4 483.1,379.4" fill="#8e8f91" stroke="#6a84dc" stroke-width="0.6" stroke-opacity="0.8" stroke-linejoin="round"/>
<polygon points="434.4,367.9 483.1,379.4 483.1,388 464.5,386.5 446.6,382.2 434.4,378.7" fill="#7e7f81" stroke="#6a84dc" stroke-width="0.6" stroke-opacity="0.8" stroke-linejoin="round"/>
<polygon points="483.1,379.4 491,374.4 491,383 483.1,388" fill="#6e6f72" stroke="#6a84dc" stroke-width="0.5" stroke-opacity="0.8" stroke-linejoin="round"/>
<polygon points="446.6,382.2 464.5,386.5 464.5,398 446.6,392.3" fill="#7e7f81" stroke="#6a84dc" stroke-width="0.6" stroke-opacity="0.8" stroke-linejoin="round"/>
<polygon points="464.5,386.5 483.1,380 483.1,388 464.5,398" fill="#6c6d70" stroke="#6a84dc" stroke-width="0.6" stroke-opacity="0.8" stroke-linejoin="round"/>
<polygon points="489.5,358.6 500,352 512,354.5 512,405 489.5,400.1" fill="#808183" stroke="#6a84dc" stroke-width="0.6" stroke-opacity="0.8" stroke-linejoin="round"/>
<polygon points="489.5,358.6 495.3,360 495.3,401.4 489.5,400.1" fill="#6d6e71" stroke="#6a84dc" stroke-width="0.5" stroke-opacity="0.8" stroke-linejoin="round"/>
<polygon points="498.8,371.5 506,373 506,379.5 498.8,378" fill="#a2a4ab" stroke="#6a84dc" stroke-width="0.5" stroke-opacity="0.8" stroke-linejoin="round"/>
<polygon points="498.8,385.8 506,387.3 506,393.8 498.8,392.3" fill="#a2a4ab" stroke="#6a84dc" stroke-width="0.5" stroke-opacity="0.8" stroke-linejoin="round"/>
<polygon points="483.1,352.2 500,343.6 512,346 512,354.5 500,352 489.5,358.6" fill="#747578" stroke="#6a84dc" stroke-width="0.5" stroke-opacity="0.8" stroke-linejoin="round"/>
<line x1="390" y1="333.6" x2="421.8" y2="313.6" stroke="#6a84dc" stroke-width="0.6" opacity="0.7"/>
<line x1="400" y1="335.3" x2="431.8" y2="315.3" stroke="#6a84dc" stroke-width="0.6" opacity="0.7"/>
<line x1="410" y1="337" x2="437" y2="320" stroke="#6a84dc" stroke-width="0.6" opacity="0.7"/>
<line x1="420" y1="338.7" x2="438" y2="327.3" stroke="#6a84dc" stroke-width="0.6" opacity="0.7"/>
<line x1="386.9" y1="345.5" x2="428" y2="352.5" stroke="#6a84dc" stroke-width="0.6" opacity="0.7"/>
<line x1="386.6" y1="358" x2="428" y2="365" stroke="#6a84dc" stroke-width="0.6" opacity="0.7"/>
<line x1="403.9" y1="336" x2="403.9" y2="374.6" stroke="#6a84dc" stroke-width="0.6" opacity="0.7"/>
<line x1="414.3" y1="337.8" x2="414.3" y2="377.5" stroke="#6a84dc" stroke-width="0.6" opacity="0.7"/>
<line x1="403.5" y1="346.1" x2="428" y2="330.7" stroke="#6a84dc" stroke-width="0.6" opacity="0.7"/>
<line x1="419.8" y1="349.8" x2="437" y2="339" stroke="#6a84dc" stroke-width="0.6" opacity="0.7"/>
<line x1="403.5" y1="357.9" x2="428" y2="342.5" stroke="#6a84dc" stroke-width="0.6" opacity="0.7"/>
<line x1="419.8" y1="362.1" x2="440" y2="349.4" stroke="#6a84dc" stroke-width="0.6" opacity="0.7"/>
<line x1="445" y1="280.2" x2="474.7" y2="260.6" stroke="#6a84dc" stroke-width="0.6" opacity="0.7"/>
<line x1="462.5" y1="284.2" x2="492.5" y2="264.4" stroke="#6a84dc" stroke-width="0.6" opacity="0.7"/>
<line x1="453" y1="288" x2="482" y2="269" stroke="#6a84dc" stroke-width="0.6" opacity="0.7"/>
<line x1="470.5" y1="292.5" x2="500" y2="273" stroke="#6a84dc" stroke-width="0.6" opacity="0.7"/>
<line x1="450.2" y1="299.8" x2="470" y2="287" stroke="#6a84dc" stroke-width="0.6" opacity="0.7"/>
<line x1="440" y1="304" x2="462" y2="290" stroke="#6a84dc" stroke-width="0.6" opacity="0.7"/>
<line x1="450" y1="319.5" x2="480" y2="300" stroke="#6a84dc" stroke-width="0.6" opacity="0.7"/>
<line x1="457" y1="335" x2="489" y2="314" stroke="#6a84dc" stroke-width="0.6" opacity="0.7"/>
<line x1="449" y1="337" x2="470" y2="323.5" stroke="#6a84dc" stroke-width="0.6" opacity="0.7"/>
<line x1="470" y1="303.5" x2="470" y2="341.5" stroke="#6a84dc" stroke-width="0.6" opacity="0.7"/>
<line x1="482" y1="298.5" x2="482" y2="343" stroke="#6a84dc" stroke-width="0.6" opacity="0.7"/>
<line x1="495" y1="318.5" x2="495" y2="345" stroke="#6a84dc" stroke-width="0.6" opacity="0.7"/>
<line x1="508" y1="304" x2="508" y2="336" stroke="#6a84dc" stroke-width="0.6" opacity="0.7"/>
<line x1="520" y1="314" x2="520" y2="336" stroke="#6a84dc" stroke-width="0.6" opacity="0.7"/>
<line x1="495" y1="318.5" x2="534.3" y2="293" stroke="#6a84dc" stroke-width="0.6" opacity="0.7"/>
<line x1="499.4" y1="296.4" x2="530" y2="276.8" stroke="#6a84dc" stroke-width="0.6" opacity="0.7"/>
<line x1="512" y1="293" x2="546.2" y2="278.2" stroke="#6a84dc" stroke-width="0.6" opacity="0.7"/>
<line x1="522" y1="297.2" x2="553" y2="282.4" stroke="#6a84dc" stroke-width="0.6" opacity="0.7"/>
<line x1="528" y1="303.7" x2="559" y2="284.1" stroke="#6a84dc" stroke-width="0.6" opacity="0.7"/>
<line x1="534.3" y1="325" x2="569" y2="321" stroke="#6a84dc" stroke-width="0.6" opacity="0.7"/>
<line x1="445.2" y1="347.2" x2="476" y2="328" stroke="#6a84dc" stroke-width="0.6" opacity="0.7"/>
<line x1="463.8" y1="347.9" x2="495" y2="328.5" stroke="#6a84dc" stroke-width="0.6" opacity="0.7"/>
<line x1="469.5" y1="352.9" x2="500" y2="334" stroke="#6a84dc" stroke-width="0.6" opacity="0.7"/>
<line x1="483.1" y1="361" x2="512" y2="343" stroke="#6a84dc" stroke-width="0.6" opacity="0.7"/>
<line x1="472" y1="361.5" x2="500" y2="344" stroke="#6a84dc" stroke-width="0.6" opacity="0.7"/>
<line x1="434.4" y1="372" x2="483.1" y2="383.5" stroke="#6a84dc" stroke-width="0.6" opacity="0.7"/>
<line x1="446.6" y1="382.2" x2="476" y2="363.5" stroke="#6a84dc" stroke-width="0.6" opacity="0.7"/>
<line x1="464.5" y1="386.5" x2="494" y2="368" stroke="#6a84dc" stroke-width="0.6" opacity="0.7"/>
<line x1="464.5" y1="398" x2="495.3" y2="378" stroke="#6a84dc" stroke-width="0.6" opacity="0.7"/>
<line x1="446.6" y1="392.3" x2="464.5" y2="381" stroke="#6a84dc" stroke-width="0.6" opacity="0.7"/>
<line x1="489.5" y1="372" x2="512" y2="358" stroke="#6a84dc" stroke-width="0.6" opacity="0.7"/>
<line x1="489.5" y1="386" x2="512" y2="372" stroke="#6a84dc" stroke-width="0.6" opacity="0.7"/>
<line x1="495.3" y1="401.4" x2="512" y2="391" stroke="#6a84dc" stroke-width="0.6" opacity="0.7"/>
<line x1="495.3" y1="366" x2="512" y2="369.8" stroke="#6a84dc" stroke-width="0.6" opacity="0.7"/>
<line x1="495.3" y1="383" x2="512" y2="386.8" stroke="#6a84dc" stroke-width="0.6" opacity="0.7"/>
<rect x="509.900" y="311.700" width="8.400" height="2" fill="#d273d6" rx="0.800" transform="rotate(7 514 312.700)"/>
<circle cx="507" cy="315.700" r="0.900" fill="#2e2e2e"/>
<rect x="382.3" y="262.9" width="184.4" height="146.8" fill="none" stroke="#86a0e6" stroke-width="0.650"/>
<rect x="381.0" y="261.6" width="2.600" height="2.600" fill="#fff" stroke="#7d98e4" stroke-width="0.500"/>
<rect x="473.2" y="261.6" width="2.600" height="2.600" fill="#fff" stroke="#7d98e4" stroke-width="0.500"/>
<rect x="565.4" y="261.6" width="2.600" height="2.600" fill="#fff" stroke="#7d98e4" stroke-width="0.500"/>
<rect x="381.0" y="335.0" width="2.600" height="2.600" fill="#fff" stroke="#7d98e4" stroke-width="0.500"/>
<rect x="565.4" y="335.0" width="2.600" height="2.600" fill="#fff" stroke="#7d98e4" stroke-width="0.500"/>
<rect x="381.0" y="408.4" width="2.600" height="2.600" fill="#fff" stroke="#7d98e4" stroke-width="0.500"/>
<rect x="473.2" y="408.4" width="2.600" height="2.600" fill="#fff" stroke="#7d98e4" stroke-width="0.500"/>
<rect x="565.4" y="408.4" width="2.600" height="2.600" fill="#fff" stroke="#7d98e4" stroke-width="0.500"/>
</svg>
<!-- s_palette -->
<div class="a" style="left:582.4px;top:179px;width:110px;height:118.8px;background:#fdfdfd;"></div>
<div class="a" style="left:598.3px;top:183px;width:26.6px;height:60.4px;background:linear-gradient(135deg,#7fb2a3,#86b8a9);border-radius:13.300px;box-shadow:0 4px 6px rgba(120,140,135,.28)"></div>
<div class="a" style="left:630px;top:183px;width:26.6px;height:60.4px;background:linear-gradient(135deg,#acd4c6,#b4d9cb);border-radius:13.300px;box-shadow:0 4px 6px rgba(120,140,135,.28)"></div>
<div class="a" style="left:661px;top:183px;width:26.6px;height:60.4px;background:linear-gradient(135deg,#ccdde4,#d5e2e7);border-radius:13.300px;box-shadow:0 4px 6px rgba(120,140,135,.28)"></div>
<div class="t" style="left:611.6px;top:250.64px;font-size:2.6px;line-height:3.12px;color:#888;font-weight:700;transform:translateX(-50%);">#83B5A7</div>
<div class="t" style="left:643.3px;top:250.64px;font-size:2.6px;line-height:3.12px;color:#888;font-weight:700;transform:translateX(-50%);">#B0D6C9</div>
<div class="t" style="left:674.3px;top:250.64px;font-size:2.6px;line-height:3.12px;color:#888;font-weight:700;transform:translateX(-50%);">#D0DFE5</div>
<div class="a" style="left:598.5px;top:262.4px;width:26.4px;height:26.4px;background:linear-gradient(135deg,#86b9aa 20%,#b4d8cc 90%);border-radius:50%;box-shadow:0 4px 6px rgba(120,140,135,.28)"></div>
<div class="a" style="left:629.5999999999999px;top:262.4px;width:26.4px;height:26.4px;background:linear-gradient(135deg,#b2d5cc 20%,#cfe0e3 90%);border-radius:50%;box-shadow:0 4px 6px rgba(120,140,135,.28)"></div>
<div class="a" style="left:660.8px;top:262.4px;width:26.4px;height:26.4px;background:linear-gradient(135deg,#d6d9d8 20%,#ecb488 95%);border-radius:50%;box-shadow:0 4px 6px rgba(120,140,135,.28)"></div>
<!-- s_fontapp -->
<div class="a" style="left:685px;top:93px;width:159.6px;height:360px;background:#fefefe;border-radius:1.500px;box-shadow:0 3px 10px rgba(0,0,0,.4)"></div>
<div class="a" style="left:685px;top:93px;width:31.8px;height:360px;background:#313131;border-radius:1.500px 0 0 1.500px"></div>
<div class="a" style="left:688.6px;top:95.2px;width:4.8px;height:4.8px;background:#f2f2f2;border-radius:50%"></div>
<div class="t" style="left:690.8px;top:115.34px;font-size:5.1px;line-height:6.12px;color:#e6e6e6;font-weight:400;">会员商用</div>
<div class="t" style="left:690.8px;top:140.14px;font-size:5.1px;line-height:6.12px;color:#e6e6e6;font-weight:400;">发现字体</div>
<div class="t" style="left:690.8px;top:152.74px;font-size:5.1px;line-height:6.12px;color:#e6e6e6;font-weight:400;">免费商用</div>
<div class="t" style="left:690.8px;top:165.34px;font-size:5.1px;line-height:6.12px;color:#e6e6e6;font-weight:400;">我的字库</div>
<div class="t" style="left:690.8px;top:190.34px;font-size:5.1px;line-height:6.12px;color:#e6e6e6;font-weight:400;">我的收藏</div>
<div class="t" style="left:690.8px;top:203.04px;font-size:5.1px;line-height:6.12px;color:#e6e6e6;font-weight:400;">美食</div>
<div class="t" style="left:690.8px;top:215.84px;font-size:5.1px;line-height:6.12px;color:#e6e6e6;font-weight:400;">写春联</div>
<div class="t" style="left:690.8px;top:228.54px;font-size:5.1px;line-height:6.12px;color:#e6e6e6;font-weight:400;">中国风</div>
<div class="t" style="left:690.8px;top:241.24px;font-size:5.1px;line-height:6.12px;color:#e6e6e6;font-weight:400;">中国节</div>
<div class="t" style="left:690.8px;top:254.04px;font-size:5.1px;line-height:6.12px;color:#e6e6e6;font-weight:400;">图形化</div>
<div class="t" style="left:690.8px;top:266.74px;font-size:5.1px;line-height:6.12px;color:#e6e6e6;font-weight:400;">男人节</div>
<div class="t" style="left:690.8px;top:279.44px;font-size:5.1px;line-height:6.12px;color:#e6e6e6;font-weight:400;">七夕</div>
<div class="t" style="left:690.8px;top:292.14px;font-size:5.1px;line-height:6.12px;color:#e6e6e6;font-weight:400;">综艺</div>
<div class="t" style="left:690.8px;top:304.94px;font-size:5.1px;line-height:6.12px;color:#e6e6e6;font-weight:400;">立夏</div>
<div class="t" style="left:690.8px;top:317.64px;font-size:5.1px;line-height:6.12px;color:#e6e6e6;font-weight:400;">秀气</div>
<div class="t" style="left:690.8px;top:330.34px;font-size:5.1px;line-height:6.12px;color:#e6e6e6;font-weight:400;">飒爽英姿</div>
<div class="t" style="left:690.8px;top:343.14px;font-size:5.1px;line-height:6.12px;color:#e6e6e6;font-weight:400;">海报</div>
<div class="t" style="left:690.8px;top:355.84px;font-size:5.1px;line-height:6.12px;color:#e6e6e6;font-weight:400;">汉呈</div>
<div class="t" style="left:690.8px;top:368.54px;font-size:5.1px;line-height:6.12px;color:#e6e6e6;font-weight:400;">520</div>
<div class="t" style="left:690.8px;top:381.34px;font-size:5.1px;line-height:6.12px;color:#e6e6e6;font-weight:400;">sum...</div>
<div class="a" style="left:690.6px;top:130.4px;width:21px;height:0.5px;background:#505050;"></div>
<div class="a" style="left:690.6px;top:181px;width:21px;height:0.5px;background:#505050;"></div>
<svg class="a" style="left:693px;top:396.200px" width="16" height="14" viewBox="0 0 32 28"><circle cx="16" cy="14" r="9" fill="#313131" stroke="#f2f2f2" stroke-width="2.200"/><ellipse cx="16" cy="15" rx="15" ry="4.600" fill="none" stroke="#f2f2f2" stroke-width="2" transform="rotate(-18 16 15)"/><path d="M8 11 A9 9 0 0 1 24 11z" fill="#313131"/><path d="M7.200 12 A9 9 0 0 1 24.800 12" fill="none" stroke="#f2f2f2" stroke-width="2.200"/><circle cx="13" cy="12" r="1.300" fill="#f2f2f2"/><circle cx="19" cy="11" r="1.300" fill="#f2f2f2"/></svg>
<div class="a" style="left:692.3px;top:422.5px;width:17.6px;height:17.6px;background:#d79aa5;border-radius:50%;overflow:hidden;border:0.800px solid #c58793"><div class="a" style="left:2.500px;top:2px;width:11px;height:10px;border-radius:50% 50% 40% 40%;background:#3a2426"></div><div class="a" style="left:4.600px;top:5.600px;width:6.800px;height:6px;border-radius:45%;background:#f1d8cc"></div><div class="a" style="left:2px;top:11.600px;width:12px;height:6px;border-radius:40% 40% 0 0;background:#1e1a1c"></div><div class="a" style="left:4px;top:3px;width:8px;height:3.600px;border-radius:50% 50% 0 0;background:#3a2426"></div></div>
<div class="a" style="left:720.6px;top:95.8px;width:121.4px;height:12.6px;background:#fff;border:0.8px solid #9a9a9a;border-radius:2px"></div>
<div class="a" style="left:726.4px;top:100.2px;width:3px;height:3px;border-radius:50%;border:0.6px solid #666"></div>
<div class="a" style="left:729px;top:102.8px;width:1.6px;height:0.6px;background:#666;transform:rotate(45deg);transform-origin:0 0"></div>
<div class="t" style="left:735.2px;top:99.0px;font-size:5px;line-height:6.0px;color:#333;">黑</div>
<div class="a" style="left:831.2px;top:99px;width:6.2px;height:6.2px;background:#6a6a6a;border-radius:50%"></div>
<div class="t" style="left:834.3px;top:98.74px;font-size:5.6px;line-height:6.72px;color:#fff;transform:translateX(-50%);">×</div>
<div class="a" style="left:725px;top:126.3px;width:113px;height:0.6px;background:#f1f1f1;"></div>
<svg class="a" style="left:723.800px;top:135.5px" width="2.400" height="2.400" viewBox="0 0 2.400 2.400"><circle cx="1.200" cy="1.200" r="1" fill="#cfcfcf"/></svg>
<div class="t" style="left:730.2px;top:133.82px;font-size:4.8px;line-height:5.76px;color:#a8a8a8;">汉仪元隆黑 90W</div>
<svg class="a" style="left:832.600px;top:134.3px" width="4.600" height="4.600" viewBox="0 0 10 10"><path d="M5 0.500 L6.300 3.600 L9.700 3.900 L7.100 6.100 L7.900 9.400 L5 7.600 L2.100 9.400 L2.900 6.100 L0.300 3.900 L3.700 3.600z" fill="none" stroke="#cdcdcd" stroke-width="0.900"/></svg>
<div class="t" style="left:724.6px;top:147.34px;font-size:10.1px;line-height:12.12px;color:#0a0a0a;font-weight:900;letter-spacing:0.1px;">人面桃花相映红</div>
<div class="a" style="left:725px;top:171.7px;width:113px;height:0.6px;background:#f1f1f1;"></div>
<svg class="a" style="left:723.800px;top:180.8px" width="2.400" height="2.400" viewBox="0 0 2.400 2.400"><circle cx="1.200" cy="1.200" r="1" fill="#2fbf4f"/></svg>
<div class="t" style="left:730.2px;top:179.22px;font-size:4.8px;line-height:5.76px;color:#a8a8a8;">汉仪元隆黑-105W</div>
<svg class="a" style="left:832.600px;top:179.7px" width="4.600" height="4.600" viewBox="0 0 10 10"><path d="M5 0.500 L6.300 3.600 L9.700 3.900 L7.100 6.100 L7.900 9.400 L5 7.600 L2.100 9.400 L2.900 6.100 L0.300 3.900 L3.700 3.600z" fill="none" stroke="#cdcdcd" stroke-width="0.900"/></svg>
<div class="t" style="left:724.6px;top:192.54px;font-size:10.1px;line-height:12.12px;color:#0a0a0a;font-weight:900;letter-spacing:0.1px;-webkit-text-stroke:0.35px #0a0a0a;">日暮东风怨啼鸟</div>
<div class="a" style="left:725px;top:217.0px;width:113px;height:0.6px;background:#f1f1f1;"></div>
<svg class="a" style="left:723.800px;top:226.2px" width="2.400" height="2.400" viewBox="0 0 2.400 2.400"><circle cx="1.200" cy="1.200" r="1" fill="#cfcfcf"/></svg>
<div class="t" style="left:730.2px;top:224.52px;font-size:4.8px;line-height:5.76px;color:#a8a8a8;">阿丽达黑体 Light</div>
<svg class="a" style="left:832.600px;top:225.0px" width="4.600" height="4.600" viewBox="0 0 10 10"><path d="M5 0.500 L6.300 3.600 L9.700 3.900 L7.100 6.100 L7.900 9.400 L5 7.600 L2.100 9.400 L2.900 6.100 L0.300 3.900 L3.700 3.600z" fill="#c4c4c4"/></svg>
<div class="t" style="left:724.6px;top:237.94px;font-size:10.1px;line-height:12.12px;color:#555;font-weight:300;letter-spacing:0.35px;">竹坞无尘水槛清</div>
<div class="a" style="left:725px;top:262.4px;width:113px;height:0.6px;background:#f1f1f1;"></div>
<svg class="a" style="left:723.800px;top:271.6px" width="2.400" height="2.400" viewBox="0 0 2.400 2.400"><circle cx="1.200" cy="1.200" r="1" fill="#2fbf4f"/></svg>
<div class="t" style="left:730.2px;top:269.92px;font-size:4.8px;line-height:5.76px;color:#a8a8a8;">汉仪雅酷黑 95W</div>
<svg class="a" style="left:832.600px;top:270.4px" width="4.600" height="4.600" viewBox="0 0 10 10"><path d="M5 0.500 L6.300 3.600 L9.700 3.900 L7.100 6.100 L7.900 9.400 L5 7.600 L2.100 9.400 L2.900 6.100 L0.300 3.900 L3.700 3.600z" fill="none" stroke="#cdcdcd" stroke-width="0.900"/></svg>
<div class="t" style="left:724.6px;top:284.94px;font-size:10.1px;line-height:12.12px;color:#0a0a0a;font-weight:900;letter-spacing:0.1px;-webkit-text-stroke:0.35px #0a0a0a;">虢国夫人承主恩</div>
<div class="a" style="left:725px;top:307.7px;width:113px;height:0.6px;background:#f1f1f1;"></div>
<svg class="a" style="left:723.800px;top:316.9px" width="2.400" height="2.400" viewBox="0 0 2.400 2.400"><circle cx="1.200" cy="1.200" r="1" fill="#cfcfcf"/></svg>
<div class="t" style="left:730.2px;top:315.22px;font-size:4.8px;line-height:5.76px;color:#a8a8a8;">汉仪铁线黑-65简</div>
<svg class="a" style="left:832.600px;top:315.7px" width="4.600" height="4.600" viewBox="0 0 10 10"><path d="M5 0.500 L6.300 3.600 L9.700 3.900 L7.100 6.100 L7.900 9.400 L5 7.600 L2.100 9.400 L2.900 6.100 L0.300 3.900 L3.700 3.600z" fill="#c4c4c4"/></svg>
<div class="t" style="left:724.6px;top:327.64px;font-size:9.6px;line-height:11.52px;color:#0a0a0a;font-weight:700;letter-spacing:0.1px;letter-spacing:0.5px;">可怜九月初三夜</div>
<div class="a" style="left:725px;top:353.1px;width:113px;height:0.6px;background:#f1f1f1;"></div>
<svg class="a" style="left:723.800px;top:362.2px" width="2.400" height="2.400" viewBox="0 0 2.400 2.400"><circle cx="1.200" cy="1.200" r="1" fill="#2fbf4f"/></svg>
<div class="t" style="left:730.2px;top:360.52px;font-size:4.8px;line-height:5.76px;color:#a8a8a8;">汉仪新蒂黑板报</div>
<svg class="a" style="left:832.600px;top:361.1px" width="4.600" height="4.600" viewBox="0 0 10 10"><path d="M5 0.500 L6.300 3.600 L9.700 3.900 L7.100 6.100 L7.900 9.400 L5 7.600 L2.100 9.400 L2.900 6.100 L0.300 3.900 L3.700 3.600z" fill="#c4c4c4"/></svg>
<div class="t" style="left:724.6px;top:373.88px;font-size:9.2px;line-height:11.04px;color:#444;font-weight:500;letter-spacing:0.1px;text-shadow:0.5px 0.4px 0 #888;">翰墨山下骆欢肥</div>
<div class="a" style="left:725px;top:398.4px;width:113px;height:0.6px;background:#f1f1f1;"></div>
<svg class="a" style="left:723.800px;top:407.6px" width="2.400" height="2.400" viewBox="0 0 2.400 2.400"><circle cx="1.200" cy="1.200" r="1" fill="#cfcfcf"/></svg>
<div class="t" style="left:730.2px;top:405.92px;font-size:4.8px;line-height:5.76px;color:#a8a8a8;">汉仪铁线黑-55简</div>
<svg class="a" style="left:832.600px;top:406.4px" width="4.600" height="4.600" viewBox="0 0 10 10"><path d="M5 0.500 L6.300 3.600 L9.700 3.900 L7.100 6.100 L7.900 9.400 L5 7.600 L2.100 9.400 L2.900 6.100 L0.300 3.900 L3.700 3.600z" fill="none" stroke="#cdcdcd" stroke-width="0.900"/></svg>
<div class="t" style="left:724.6px;top:419.04px;font-size:9.6px;line-height:11.52px;color:#0a0a0a;font-weight:600;letter-spacing:0.1px;letter-spacing:0.5px;">半江瑟瑟半江红</div>
<div class="a" style="left:717px;top:435px;width:127.6px;height:18px;background:#fefefe;border-radius:0 0 1.500px 0"></div>
<div class="a" style="left:722.2px;top:438px;width:88px;height:10.4px;background:#ececec;border-radius:1.500px"></div>
<div class="t" style="left:726px;top:440.64px;font-size:4.6px;line-height:5.52px;color:#a4a4a4;">请输入文字内容</div>
<svg class="a" style="left:802.800px;top:441.900px" width="4" height="2.600" viewBox="0 0 8 5"><path d="M0.600 0.600 L4 4 L7.400 0.600" fill="none" stroke="#555" stroke-width="1.300"/></svg>
<div class="a" style="left:818px;top:443px;width:18px;height:0.5px;background:#c8c8c8;"></div>
<div class="a" style="left:814.6px;top:441.2px;width:4px;height:4px;background:#fff;border-radius:50%;border:0.6px solid #666"></div>
<!-- s_menu -->
<div class="a" style="left:508.8px;top:319.6px;width:64.2px;height:128.4px;background:rgba(236,236,236,0.94);border-radius:2.500px;box-shadow:0 2px 6px rgba(0,0,0,.35),0 0 0 0.400px rgba(0,0,0,.25)"></div>
<div class="a" style="left:508.8px;top:339.2px;width:64.2px;height:0.7px;background:#d2d2d2;"></div>
<div class="a" style="left:508.8px;top:352.59999999999997px;width:64.2px;height:0.7px;background:#d2d2d2;"></div>
<div class="a" style="left:508.8px;top:365.4px;width:64.2px;height:0.7px;background:#d2d2d2;"></div>
<div class="a" style="left:508.8px;top:395.7px;width:64.2px;height:0.7px;background:#d2d2d2;"></div>
<div class="t" style="left:517.6px;top:321.59px;font-size:5.85px;line-height:7.02px;color:#1c1c1c;font-weight:500;letter-spacing:0.05px">还原扩展外观</div>
<div class="t" style="left:517.6px;top:329.79px;font-size:5.85px;line-height:7.02px;color:#b4b4b4;font-weight:500;letter-spacing:0.05px">重做</div>
<div class="t" style="left:517.6px;top:342.89px;font-size:5.85px;line-height:7.02px;color:#1c1c1c;font-weight:500;letter-spacing:0.05px">设为像素级优化</div>
<div class="t" style="left:517.6px;top:355.99px;font-size:5.85px;line-height:7.02px;color:#1c1c1c;font-weight:500;letter-spacing:0.05px">透视</div>
<svg class="a" style="left:563.400px;top:357.5px" width="3.400" height="3.800" viewBox="0 0 7 8"><path d="M0 0 L7 4 L0 8z" fill="#1c1c1c"/></svg>
<div class="t" style="left:517.6px;top:369.19px;font-size:5.85px;line-height:7.02px;color:#b4b4b4;font-weight:500;letter-spacing:0.05px">裁剪图像</div>
<div class="t" style="left:517.6px;top:377.09px;font-size:5.85px;line-height:7.02px;color:#1c1c1c;font-weight:500;letter-spacing:0.05px">隔离选定的组</div>
<div class="a" style="left:508.8px;top:384.8px;width:64.2px;height:7.4px;background:#3c78dc;"></div>
<div class="t" style="left:517.6px;top:384.99px;font-size:5.85px;line-height:7.02px;color:#fff;font-weight:500;letter-spacing:0.05px">取消编组</div>
<div class="t" style="left:517.6px;top:398.09px;font-size:5.85px;line-height:7.02px;color:#1c1c1c;font-weight:500;letter-spacing:0.05px">变换</div>
<svg class="a" style="left:563.400px;top:399.6px" width="3.400" height="3.800" viewBox="0 0 7 8"><path d="M0 0 L7 4 L0 8z" fill="#1c1c1c"/></svg>
<div class="t" style="left:517.6px;top:405.99px;font-size:5.85px;line-height:7.02px;color:#1c1c1c;font-weight:500;letter-spacing:0.05px">排列</div>
<svg class="a" style="left:563.400px;top:407.5px" width="3.400" height="3.800" viewBox="0 0 7 8"><path d="M0 0 L7 4 L0 8z" fill="#1c1c1c"/></svg>
<div class="t" style="left:517.6px;top:413.99px;font-size:5.85px;line-height:7.02px;color:#1c1c1c;font-weight:500;letter-spacing:0.05px">选择</div>
<svg class="a" style="left:563.400px;top:415.5px" width="3.400" height="3.800" viewBox="0 0 7 8"><path d="M0 0 L7 4 L0 8z" fill="#1c1c1c"/></svg>
<div class="t" style="left:517.6px;top:422.19px;font-size:5.85px;line-height:7.02px;color:#1c1c1c;font-weight:500;letter-spacing:0.05px">添加到库</div>
<div class="t" style="left:517.6px;top:430.19px;font-size:5.85px;line-height:7.02px;color:#1c1c1c;font-weight:500;letter-spacing:0.05px">收集以导出</div>
<svg class="a" style="left:563.400px;top:431.70000000000005px" width="3.400" height="3.800" viewBox="0 0 7 8"><path d="M0 0 L7 4 L0 8z" fill="#1c1c1c"/></svg>
<div class="t" style="left:517.6px;top:438.19px;font-size:5.85px;line-height:7.02px;color:#1c1c1c;font-weight:500;letter-spacing:0.05px">导出所选项目...</div>
<svg class="a" style="left:508px;top:381.500px" width="5" height="7.500" viewBox="0 0 10 15"><path d="M0.800 0.800 V11.500 L3.500 9.200 L5.500 14 L7.500 13.200 L5.600 8.600 L9 8.400z" fill="#111" stroke="#fff" stroke-width="0.900"/></svg>
<!-- s_layers -->
<div class="a" style="left:935.8px;top:42.6px;width:8.4px;height:536px;background:#4a4a4a;"></div>
<div class="a" style="left:937px;top:300px;width:6px;height:13.8px;background:#6c6c6c;border-radius:3px"></div>
<svg class="a" style="left:938.3px;top:45.325px" width="3.4" height="2.55" viewBox="0 0 8 6"><path d="M0.600 5 L4 1 L7.400 5" fill="none" stroke="#c8c8c8" stroke-width="1.400"/></svg>
<svg class="a" style="left:938.3px;top:572.725px" width="3.4" height="2.55" viewBox="0 0 8 6"><path d="M0.600 1 L4 5 L7.400 1" fill="none" stroke="#b0b0b0" stroke-width="1.400"/></svg>
<div class="a" style="left:944.2px;top:26.2px;width:136px;height:560.8px;background:#4a4a4a;"></div>
<div class="a" style="left:944.2px;top:26.2px;width:1.6px;height:560.6px;background:#3c3c3c;"></div>
<div class="a" style="left:945.8px;top:26.2px;width:134.2px;height:6.4px;background:#3e3e3e;"></div>
<div class="t" style="left:1073.5px;top:26.96px;font-size:4.4px;line-height:5.28px;color:#aaa;letter-spacing:-0.600px">››</div>
<div class="a" style="left:945.8px;top:32.6px;width:134.2px;height:14.8px;background:#414141;"></div>
<div class="a" style="left:945.8px;top:32.6px;width:20.4px;height:14.8px;background:#535353;"></div>
<div class="a" style="left:966.2px;top:32.6px;width:0.6px;height:14.8px;background:#383838;"></div>
<div class="a" style="left:987.3px;top:32.6px;width:0.6px;height:14.8px;background:#383838;"></div>
<div class="a" style="left:1008.2px;top:32.6px;width:0.6px;height:14.8px;background:#383838;"></div>
<div class="a" style="left:1034.8px;top:32.6px;width:0.6px;height:14.8px;background:#383838;"></div>
<div class="a" style="left:1056.6px;top:32.6px;width:0.6px;height:14.8px;background:#383838;"></div>
<div class="t" style="left:956px;top:37.76px;font-size:5.4px;line-height:6.48px;color:#f0f0f0;transform:translateX(-50%);">图层</div>
<div class="t" style="left:976.8px;top:37.76px;font-size:5.4px;line-height:6.48px;color:#a0a0a0;transform:translateX(-50%);">属性</div>
<div class="t" style="left:997.8px;top:37.76px;font-size:5.4px;line-height:6.48px;color:#a0a0a0;transform:translateX(-50%);">颜色</div>
<div class="t" style="left:1021.6px;top:37.76px;font-size:5.4px;line-height:6.48px;color:#a0a0a0;transform:translateX(-50%);">透明度</div>
<div class="t" style="left:1045.6px;top:37.76px;font-size:5.4px;line-height:6.48px;color:#a0a0a0;transform:translateX(-50%);">渐变</div>
<div class="a" style="left:1072.6px;top:39.6px;width:5px;height:0.8px;background:#a8a8a8;"></div>
<div class="a" style="left:1072.6px;top:41.1px;width:5px;height:0.8px;background:#a8a8a8;"></div>
<div class="a" style="left:1072.6px;top:42.6px;width:5px;height:0.8px;background:#a8a8a8;"></div>
<div class="a" style="left:945.8px;top:47.4px;width:134.2px;height:399px;background:#4f4f4f;"></div>
<div class="a" style="left:948.4px;top:50.6px;width:131.6px;height:395.8px;background:#535452;border-top:0.6px solid #444;border-left:0.6px solid #444"></div>
<div class="a" style="left:948.4px;top:62.3px;width:131.6px;height:11px;background:#4e6787;"></div>
<div class="a" style="left:948.4px;top:62.1px;width:131.6px;height:0.5px;background:#4a4a49;"></div>
<div class="a" style="left:948.4px;top:73.2px;width:131.6px;height:0.5px;background:#4a4a49;"></div>
<div class="a" style="left:948.4px;top:84.2px;width:131.6px;height:0.5px;background:#4a4a49;"></div>
<div class="a" style="left:948.4px;top:95.4px;width:131.6px;height:0.5px;background:#4a4a49;"></div>
<div class="a" style="left:948.4px;top:106.60000000000001px;width:131.6px;height:0.5px;background:#4a4a49;"></div>
<svg class="a" style="left:950.1999999999999px;top:54.5px" width="6.400" height="4.400" viewBox="0 0 16 11"><path d="M0.500 5.500 C4 0 12 0 15.500 5.500 C12 11 4 11 0.500 5.500z" fill="#cfcfcf"/><circle cx="8" cy="5.500" r="2.700" fill="#555"/><circle cx="8" cy="5.500" r="1.200" fill="#cfcfcf"/></svg>
<div class="a" style="left:971.3px;top:51.5px;width:1.9px;height:10.6px;background:#62c95c;"></div>
<div class="a" style="left:958.8px;top:51.2px;width:0.5px;height:11px;background:#4a4a49;"></div>
<div class="a" style="left:969.4px;top:51.2px;width:0.5px;height:11px;background:#4a4a49;"></div>
<div class="a" style="left:1058.4px;top:51.2px;width:0.5px;height:11px;background:#4a4a49;"></div>
<svg class="a" style="left:950.1999999999999px;top:65.6px" width="6.400" height="4.400" viewBox="0 0 16 11"><path d="M0.500 5.500 C4 0 12 0 15.500 5.500 C12 11 4 11 0.500 5.500z" fill="#cfcfcf"/><circle cx="8" cy="5.500" r="2.700" fill="#555"/><circle cx="8" cy="5.500" r="1.200" fill="#cfcfcf"/></svg>
<div class="a" style="left:971.3px;top:62.599999999999994px;width:1.9px;height:10.6px;background:#4c6bd0;"></div>
<div class="a" style="left:958.8px;top:62.3px;width:0.5px;height:11px;background:#4a4a49;"></div>
<div class="a" style="left:969.4px;top:62.3px;width:0.5px;height:11px;background:#4a4a49;"></div>
<div class="a" style="left:1058.4px;top:62.3px;width:0.5px;height:11px;background:#4a4a49;"></div>
<svg class="a" style="left:950.1999999999999px;top:76.6px" width="6.400" height="4.400" viewBox="0 0 16 11"><path d="M0.500 5.500 C4 0 12 0 15.500 5.500 C12 11 4 11 0.500 5.500z" fill="#cfcfcf"/><circle cx="8" cy="5.500" r="2.700" fill="#555"/><circle cx="8" cy="5.500" r="1.200" fill="#cfcfcf"/></svg>
<div class="a" style="left:971.3px;top:73.6px;width:1.9px;height:10.6px;background:#4c6bd0;"></div>
<div class="a" style="left:958.8px;top:73.3px;width:0.5px;height:11px;background:#4a4a49;"></div>
<div class="a" style="left:969.4px;top:73.3px;width:0.5px;height:11px;background:#4a4a49;"></div>
<div class="a" style="left:1058.4px;top:73.3px;width:0.5px;height:11px;background:#4a4a49;"></div>
<svg class="a" style="left:950.1999999999999px;top:87.8px" width="6.400" height="4.400" viewBox="0 0 16 11"><path d="M0.500 5.500 C4 0 12 0 15.500 5.500 C12 11 4 11 0.500 5.500z" fill="#cfcfcf"/><circle cx="8" cy="5.500" r="2.700" fill="#555"/><circle cx="8" cy="5.500" r="1.200" fill="#cfcfcf"/></svg>
<div class="a" style="left:971.3px;top:84.8px;width:1.9px;height:10.6px;background:#4c6bd0;"></div>
<div class="a" style="left:958.8px;top:84.5px;width:0.5px;height:11px;background:#4a4a49;"></div>
<div class="a" style="left:969.4px;top:84.5px;width:0.5px;height:11px;background:#4a4a49;"></div>
<div class="a" style="left:1058.4px;top:84.5px;width:0.5px;height:11px;background:#4a4a49;"></div>
<svg class="a" style="left:950.1999999999999px;top:99.0px" width="6.400" height="4.400" viewBox="0 0 16 11"><path d="M0.500 5.500 C4 0 12 0 15.500 5.500 C12 11 4 11 0.500 5.500z" fill="#cfcfcf"/><circle cx="8" cy="5.500" r="2.700" fill="#555"/><circle cx="8" cy="5.500" r="1.200" fill="#cfcfcf"/></svg>
<div class="a" style="left:971.3px;top:96.0px;width:1.9px;height:10.6px;background:#cf5048;"></div>
<div class="a" style="left:958.8px;top:95.7px;width:0.5px;height:11px;background:#4a4a49;"></div>
<div class="a" style="left:969.4px;top:95.7px;width:0.5px;height:11px;background:#4a4a49;"></div>
<div class="a" style="left:1058.4px;top:95.7px;width:0.5px;height:11px;background:#4a4a49;"></div>
<div class="a" style="left:963.2px;top:101px;width:4px;height:3.2px;background:#d8d8d8;border-radius:0.500px"></div>
<div class="a" style="left:963.9px;top:98.8px;width:2.6px;height:3px;border:0.7px solid #d8d8d8;border-radius:1.300px 1.300px 0 0"></div>
<div class="a" style="left:987.6px;top:52.2px;width:9px;height:9px;background:#fff;border:0.7px solid #333;border-radius:0.800px"></div>
<div class="t" style="left:999.4px;top:52.6px;font-size:7px;line-height:8.4px;color:#cecece;">图层 3</div>
<svg class="a" style="left:978.3px;top:66.52499999999999px" width="3.4" height="2.55" viewBox="0 0 8 6"><path d="M0.600 1 L4 5 L7.400 1" fill="none" stroke="#c8c8c8" stroke-width="1.400"/></svg>
<div class="a" style="left:987.6px;top:63.3px;width:9px;height:9px;background:#eef1f1;border:0.7px solid #333;border-radius:0.800px"><div class="a" style="left:1.500px;top:2.500px;width:3px;height:2.500px;background:#7c8288"></div><div class="a" style="left:4.800px;top:1.500px;width:2.200px;height:2px;background:#b7d3ca"></div></div>
<div class="t" style="left:999.4px;top:63.7px;font-size:7px;line-height:8.4px;color:#dadada;">图层 1</div>
<svg class="a" style="left:1076.600px;top:62.300px" width="2.800" height="2.800" viewBox="0 0 3 3"><path d="M0 0 H3 V3z" fill="#e8e8e8"/></svg>
<svg class="a" style="left:989.125px;top:77.1px" width="2.55" height="3.4" viewBox="0 0 6 8"><path d="M1 0.600 L5 4 L1 7.400" fill="none" stroke="#c8c8c8" stroke-width="1.400"/></svg>
<div class="a" style="left:999.6px;top:74.3px;width:9px;height:9px;background:#f2f4f4;border:0.7px solid #333;border-radius:0.800px"><div class="a" style="left:1px;top:2px;width:6px;height:4.800px;background:linear-gradient(180deg,#8b8f93,#6c7076)"></div></div>
<div class="t" style="left:1011.4px;top:74.8px;font-size:7px;line-height:8.4px;color:#cecece;">&lt;编组&gt;</div>
<svg class="a" style="left:989.125px;top:88.3px" width="2.55" height="3.4" viewBox="0 0 6 8"><path d="M1 0.600 L5 4 L1 7.400" fill="none" stroke="#c8c8c8" stroke-width="1.400"/></svg>
<div class="a" style="left:999.6px;top:85.5px;width:9px;height:9px;background:#fafafa;border:0.7px solid #333;border-radius:0.800px"><div class="a" style="left:1px;top:2.200px;width:1.800px;height:3px;background:#7fb5a5"></div><div class="a" style="left:3.200px;top:2.200px;width:1.800px;height:3px;background:#b3d8cb"></div><div class="a" style="left:5.400px;top:2.200px;width:1.800px;height:3px;background:#e5b896"></div></div>
<div class="t" style="left:1011.4px;top:86.0px;font-size:7px;line-height:8.4px;color:#cecece;letter-spacing:-0.1px">OpZtWT....</div>
<svg class="a" style="left:989.125px;top:99.5px" width="2.55" height="3.4" viewBox="0 0 6 8"><path d="M1 0.600 L5 4 L1 7.400" fill="none" stroke="#c8c8c8" stroke-width="1.400"/></svg>
<div class="a" style="left:999.6px;top:96.7px;width:9px;height:9px;background:#d4e0e3;border:0.7px solid #333;border-radius:0.800px"></div>
<div class="t" style="left:1011.4px;top:97.2px;font-size:7px;line-height:8.4px;color:#cecece;">图层 2</div>
<div class="a" style="left:1062.8px;top:54.5px;width:4.4px;height:4.4px;border-radius:50%;border:0.8px solid #cfcfcf"></div>
<div class="a" style="left:1062.8px;top:65.6px;width:4.4px;height:4.4px;border-radius:50%;border:0.8px solid #cfcfcf"></div>
<div class="a" style="left:1061.6px;top:75.39999999999999px;width:6.8px;height:6.8px;background:#8a8a8a;border-radius:50%"></div>
<div class="a" style="left:1063.4px;top:77.2px;width:3.2px;height:3.2px;border-radius:50%;border:0.600px solid #aaa"></div>
<div class="a" style="left:1062.8px;top:87.8px;width:4.4px;height:4.4px;border-radius:50%;border:0.8px solid #cfcfcf"></div>
<div class="a" style="left:1062.8px;top:99.0px;width:4.4px;height:4.4px;border-radius:50%;border:0.8px solid #cfcfcf"></div>
<div class="a" style="left:1070.2px;top:65.8px;width:4px;height:4px;background:#3b67e0;border:0.700px solid #1d2f6f"></div>
<div class="a" style="left:1070.2px;top:76.8px;width:4px;height:4px;background:#3b67e0;border:0.700px solid #1d2f6f"></div>
<div class="a" style="left:945.8px;top:446.4px;width:134.2px;height:12.2px;background:#484848;border-top:0.6px solid #3c3c3c"></div>
<div class="t" style="left:949px;top:447.46px;font-size:6.9px;line-height:8.28px;color:#d8d8d8;">2 图层</div>
<div class="a" style="left:992.4px;top:449px;width:4.6px;height:4.6px;border:0.8px solid #d0d0d0"></div>
<div class="a" style="left:995px;top:447.6px;width:3.2px;height:3.2px;background:#484848;"></div>
<svg class="a" style="left:994.600px;top:447.400px" width="3.600" height="3.600" viewBox="0 0 6 6"><path d="M1 5 L5 1 M2 1 H5 V4" fill="none" stroke="#d0d0d0" stroke-width="1.200"/></svg>
<div class="a" style="left:1006.6px;top:447.8px;width:4px;height:4px;border-radius:50%;border:0.9px solid #d0d0d0"></div>
<div class="a" style="left:1004.4px;top:453.4px;width:2.6px;height:0.9px;background:#d0d0d0;transform:rotate(-45deg);transform-origin:100% 50%"></div>
<div class="a" style="left:1019.6px;top:448.4px;width:4.6px;height:4.6px;background:#d0d0d0;"><div class="a" style="left:1px;top:1px;width:2px;height:2px;background:#484848"></div></div>
<div class="a" style="left:1022.6px;top:452px;width:2px;height:2px;background:#d0d0d0;"></div>
<div class="a" style="left:1032px;top:449px;width:3px;height:2.4px;background:#d0d0d0;"></div>
<div class="a" style="left:1035px;top:450px;width:2.6px;height:0.8px;background:#d0d0d0;"></div>
<div class="a" style="left:1037px;top:450px;width:3.2px;height:3.6px;background:#d0d0d0;"></div>
<div class="a" style="left:1048.6px;top:448.6px;width:4.4px;height:4.6px;background:#d0d0d0;"></div>
<div class="a" style="left:1047.4px;top:447.6px;width:2.4px;height:2.4px;background:#8a8a8a;"></div>
<div class="a" style="left:1061.8px;top:449.4px;width:4.2px;height:4.6px;background:#d0d0d0;border-radius:0 0 0.600px 0.600px"></div>
<div class="a" style="left:1061px;top:448px;width:5.8px;height:0.9px;background:#d0d0d0;"></div>
<div class="a" style="left:1062.8px;top:447.3px;width:2.2px;height:0.8px;background:#d0d0d0;"></div>
<!-- s_char -->
<div class="a" style="left:804.4px;top:475px;width:130.4px;height:97.6px;background:#4b4b4b;border-radius:2px;box-shadow:0 1px 4px rgba(0,0,0,.45)"></div>
<div class="a" style="left:804.4px;top:475px;width:130.4px;height:6.6px;background:#3e3e3e;border-radius:2px 2px 0 0"></div>
<div class="t" style="left:806.4px;top:473.86px;font-size:7.4px;line-height:8.88px;color:#cfcfcf;">×</div>
<div class="a" style="left:926.6px;top:478px;width:3.2px;height:0.9px;background:#9a9a9a;"></div>
<div class="a" style="left:804.4px;top:481.6px;width:130.4px;height:14.4px;background:#414141;"></div>
<div class="a" style="left:804.4px;top:481.6px;width:24.6px;height:14.4px;background:#4b4b4b;"></div>
<div class="t" style="left:807.2px;top:486.44px;font-size:4.6px;line-height:5.52px;color:#999;">⁝</div>
<div class="t" style="left:813.2px;top:486.16px;font-size:5.4px;line-height:6.48px;color:#ececec;font-weight:500;">字符</div>
<div class="a" style="left:925.4px;top:487.4px;width:5.2px;height:0.8px;background:#8e8e8e;"></div>
<div class="a" style="left:925.4px;top:488.9px;width:5.2px;height:0.8px;background:#8e8e8e;"></div>
<div class="a" style="left:925.4px;top:490.4px;width:5.2px;height:0.8px;background:#8e8e8e;"></div>
<div class="a" style="left:808.2px;top:500.8px;width:123px;height:8.6px;background:#3f3f3f;border-radius:0.800px"></div>
<div class="a" style="left:921.4px;top:500.8px;width:0.6px;height:8.6px;background:#4b4b4b;"></div>
<div class="a" style="left:810px;top:503px;width:3.2px;height:3.2px;border-radius:50%;border:0.7px solid #bdbdbd"></div>
<div class="a" style="left:812.6px;top:505.8px;width:2px;height:0.7px;background:#bdbdbd;transform:rotate(45deg);transform-origin:0 0"></div>
<svg class="a" style="left:814.9px;top:505.575px" width="2.2" height="1.6500000000000001" viewBox="0 0 8 6"><path d="M0.600 1 L4 5 L7.400 1" fill="none" stroke="#aaa" stroke-width="1.400"/></svg>
<div class="t" style="left:821.4px;top:500.6px;font-size:7px;line-height:8.4px;color:#dcdcdc;letter-spacing:0.1px">Adobe 宋体 Std L</div>
<svg class="a" style="left:924.6999999999999px;top:503.925px" width="3.4" height="2.55" viewBox="0 0 8 6"><path d="M0.600 1 L4 5 L7.400 1" fill="none" stroke="#dcdcdc" stroke-width="1.400"/></svg>
<div class="a" style="left:808.2px;top:514.4px;width:123px;height:8.6px;background:#3f3f3f;border-radius:0.800px"></div>
<div class="a" style="left:921.4px;top:514.4px;width:0.6px;height:8.6px;background:#4b4b4b;"></div>
<div class="t" style="left:811.2px;top:515.24px;font-size:5.6px;line-height:6.72px;color:#dcdcdc;">-</div>
<svg class="a" style="left:924.6999999999999px;top:517.525px" width="3.4" height="2.55" viewBox="0 0 8 6"><path d="M0.600 1 L4 5 L7.400 1" fill="none" stroke="#dcdcdc" stroke-width="1.400"/></svg>
<div class="a" style="left:820.2px;top:531.4px;width:7.2px;height:8.6px;background:#414141;border-radius:0.800px"></div>
<svg class="a" style="left:821.6999999999999px;top:531.4999999999999px" width="4.200" height="8.400" viewBox="0 0 8 16"><path d="M1 6 L4 2.500 L7 6 M1 10 L4 13.500 L7 10" fill="none" stroke="#d4d4d4" stroke-width="1.500"/></svg>
<div class="a" style="left:829px;top:531.4px;width:24.8px;height:8.6px;background:#3f3f3f;border-radius:0.800px"></div><div class="t" style="left:830.4px;top:530.6px;font-size:7px;line-height:8.4px;color:#dcdcdc;">140 pt</div>
<div class="a" style="left:854.8px;top:531.4px;width:7.8px;height:8.6px;background:#414141;border-radius:0.800px"></div>
<svg class="a" style="left:857.0999999999999px;top:534.625px" width="3.4" height="2.55" viewBox="0 0 8 6"><path d="M0.600 1 L4 5 L7.400 1" fill="none" stroke="#dcdcdc" stroke-width="1.400"/></svg>
<div class="a" style="left:887.6px;top:531.4px;width:7.2px;height:8.6px;background:#414141;border-radius:0.800px"></div>
<svg class="a" style="left:889.1px;top:531.4999999999999px" width="4.200" height="8.400" viewBox="0 0 8 16"><path d="M1 6 L4 2.500 L7 6 M1 10 L4 13.500 L7 10" fill="none" stroke="#d4d4d4" stroke-width="1.500"/></svg>
<div class="a" style="left:896.4px;top:531.4px;width:24.8px;height:8.6px;background:#3f3f3f;border-radius:0.800px"></div><div class="t" style="left:897.8px;top:530.6px;font-size:7px;line-height:8.4px;color:#dcdcdc;">147 pt</div>
<div class="a" style="left:922.2px;top:531.4px;width:8.4px;height:8.6px;background:#414141;border-radius:0.800px"></div>
<svg class="a" style="left:924.6999999999999px;top:534.625px" width="3.4" height="2.55" viewBox="0 0 8 6"><path d="M0.600 1 L4 5 L7.400 1" fill="none" stroke="#dcdcdc" stroke-width="1.400"/></svg>
<div class="a" style="left:820.2px;top:545.2px;width:7.2px;height:8.6px;background:#414141;border-radius:0.800px"></div>
<svg class="a" style="left:821.6999999999999px;top:545.3px" width="4.200" height="8.400" viewBox="0 0 8 16"><path d="M1 6 L4 2.500 L7 6 M1 10 L4 13.500 L7 10" fill="none" stroke="#d4d4d4" stroke-width="1.500"/></svg>
<div class="a" style="left:829px;top:545.2px;width:24.8px;height:8.6px;background:#3f3f3f;border-radius:0.800px"></div><div class="t" style="left:830.4px;top:544.4px;font-size:7px;line-height:8.4px;color:#dcdcdc;">100%</div>
<div class="a" style="left:854.8px;top:545.2px;width:7.8px;height:8.6px;background:#414141;border-radius:0.800px"></div>
<svg class="a" style="left:857.0999999999999px;top:548.4250000000001px" width="3.4" height="2.55" viewBox="0 0 8 6"><path d="M0.600 1 L4 5 L7.400 1" fill="none" stroke="#dcdcdc" stroke-width="1.400"/></svg>
<div class="a" style="left:887.6px;top:545.2px;width:7.2px;height:8.6px;background:#414141;border-radius:0.800px"></div>
<svg class="a" style="left:889.1px;top:545.3px" width="4.200" height="8.400" viewBox="0 0 8 16"><path d="M1 6 L4 2.500 L7 6 M1 10 L4 13.500 L7 10" fill="none" stroke="#d4d4d4" stroke-width="1.500"/></svg>
<div class="a" style="left:896.4px;top:545.2px;width:24.8px;height:8.6px;background:#3f3f3f;border-radius:0.800px"></div><div class="t" style="left:897.8px;top:544.4px;font-size:7px;line-height:8.4px;color:#dcdcdc;">100%</div>
<div class="a" style="left:922.2px;top:545.2px;width:8.4px;height:8.6px;background:#414141;border-radius:0.800px"></div>
<svg class="a" style="left:924.6999999999999px;top:548.4250000000001px" width="3.4" height="2.55" viewBox="0 0 8 6"><path d="M0.600 1 L4 5 L7.400 1" fill="none" stroke="#dcdcdc" stroke-width="1.400"/></svg>
<div class="a" style="left:820.2px;top:559.0px;width:7.2px;height:8.6px;background:#414141;border-radius:0.800px"></div>
<svg class="a" style="left:821.6999999999999px;top:559.0999999999999px" width="4.200" height="8.400" viewBox="0 0 8 16"><path d="M1 6 L4 2.500 L7 6 M1 10 L4 13.500 L7 10" fill="none" stroke="#d4d4d4" stroke-width="1.500"/></svg>
<div class="a" style="left:829px;top:559.0px;width:24.8px;height:8.6px;background:#3f3f3f;border-radius:0.800px"></div><div class="t" style="left:830.4px;top:558.2px;font-size:7px;line-height:8.4px;color:#dcdcdc;">自动</div>
<div class="a" style="left:854.8px;top:559.0px;width:7.8px;height:8.6px;background:#414141;border-radius:0.800px"></div>
<svg class="a" style="left:857.0999999999999px;top:562.225px" width="3.4" height="2.55" viewBox="0 0 8 6"><path d="M0.600 1 L4 5 L7.400 1" fill="none" stroke="#dcdcdc" stroke-width="1.400"/></svg>
<div class="a" style="left:887.6px;top:559.0px;width:7.2px;height:8.6px;background:#414141;border-radius:0.800px"></div>
<svg class="a" style="left:889.1px;top:559.0999999999999px" width="4.200" height="8.400" viewBox="0 0 8 16"><path d="M1 6 L4 2.500 L7 6 M1 10 L4 13.500 L7 10" fill="none" stroke="#d4d4d4" stroke-width="1.500"/></svg>
<div class="a" style="left:896.4px;top:559.0px;width:24.8px;height:8.6px;background:#3f3f3f;border-radius:0.800px"></div><div class="t" style="left:897.8px;top:558.2px;font-size:7px;line-height:8.4px;color:#dcdcdc;">0</div>
<div class="a" style="left:922.2px;top:559.0px;width:8.4px;height:8.6px;background:#414141;border-radius:0.800px"></div>
<svg class="a" style="left:924.6999999999999px;top:562.225px" width="3.4" height="2.55" viewBox="0 0 8 6"><path d="M0.600 1 L4 5 L7.400 1" fill="none" stroke="#dcdcdc" stroke-width="1.400"/></svg>
<div class="t" style="left:807.2px;top:534.04px;font-size:5.6px;line-height:6.72px;color:#d6d6d6;font-family:'Liberation Serif',serif;font-weight:700;">T</div>
<div class="t" style="left:810.4px;top:530.04px;font-size:9.6px;line-height:11.52px;color:#d6d6d6;font-family:'Liberation Serif',serif;font-weight:700;">T</div>
<div class="t" style="left:810.4px;top:543.84px;font-size:9.6px;line-height:11.52px;color:#d6d6d6;font-family:'Liberation Serif',serif;font-weight:700;">T</div>
<svg class="a" style="left:806.800px;top:545.600px" width="3" height="8.400" viewBox="0 0 6 17"><path d="M3 0.500 L5.500 4 H0.500z M3 16.500 L0.500 13 H5.500z M3 3 V14" fill="#d6d6d6" stroke="#d6d6d6" stroke-width="1"/></svg>
<div class="t" style="left:806.8px;top:558.76px;font-size:6.4px;line-height:7.68px;color:#d6d6d6;">V</div>
<div class="t" style="left:810.6px;top:559.56px;font-size:6.4px;line-height:7.68px;color:#d6d6d6;">A</div>
<svg class="a" style="left:808px;top:566.600px" width="7" height="2.600" viewBox="0 0 14 5"><path d="M0.500 2.500 L4 0.500 V4.500z M3 2.500 H14" fill="#d6d6d6" stroke="#d6d6d6" stroke-width="0.900"/></svg>
<div class="t" style="left:877.6px;top:530.28px;font-size:5.2px;line-height:6.24px;color:#d6d6d6;font-family:'Liberation Serif',serif;font-weight:700;">A</div>
<div class="t" style="left:877.6px;top:535.48px;font-size:5.2px;line-height:6.24px;color:#d6d6d6;font-family:'Liberation Serif',serif;font-weight:700;">A</div>
<svg class="a" style="left:874.600px;top:532px" width="3" height="8.400" viewBox="0 0 6 17"><path d="M3 0.500 L5.500 4 H0.500z M3 16.500 L0.500 13 H5.500z M3 3 V14" fill="#d6d6d6" stroke="#d6d6d6" stroke-width="1"/></svg>
<div class="a" style="left:876.6px;top:535.7px;width:6.4px;height:0.6px;background:#d6d6d6;"></div>
<div class="t" style="left:876px;top:543.2px;font-size:9px;line-height:10.8px;color:#d6d6d6;font-family:'Liberation Serif',serif;font-weight:700;">T</div>
<svg class="a" style="left:875px;top:552.600px" width="9" height="2.800" viewBox="0 0 18 5.600"><path d="M0.500 2.800 L4 0.500 V5.100z M17.500 2.800 L14 0.500 V5.100z M3 2.800 H15" fill="#d6d6d6" stroke="#d6d6d6" stroke-width="0.900"/></svg>
<div class="a" style="left:875px;top:559.6px;width:9.4px;height:5.8px;background:#d2d2d2;border-radius:0.500px"></div>
<div class="t" style="left:875.6px;top:559.72px;font-size:4.8px;line-height:5.76px;color:#3a3a3a;font-weight:700;letter-spacing:-0.200px">VA</div>
<svg class="a" style="left:875px;top:566px" width="9.400" height="2.800" viewBox="0 0 18 5.600"><path d="M0.500 2.800 L4 0.500 V5.100z M17.500 2.800 L14 0.500 V5.100z M3 2.800 H15" fill="#d6d6d6" stroke="#d6d6d6" stroke-width="0.900"/></svg>
<!-- s_para -->
<div class="a" style="left:945.8px;top:458.6px;width:134.2px;height:13.6px;background:#414141;"></div>
<div class="a" style="left:1037.6px;top:458.6px;width:24px;height:13.6px;background:#4d4d4c;"></div>
<div class="a" style="left:965px;top:458.6px;width:0.6px;height:13.6px;background:#383838;"></div>
<div class="a" style="left:983px;top:458.6px;width:0.6px;height:13.6px;background:#383838;"></div>
<div class="a" style="left:1002.4px;top:458.6px;width:0.6px;height:13.6px;background:#383838;"></div>
<div class="a" style="left:1022px;top:458.6px;width:0.6px;height:13.6px;background:#383838;"></div>
<div class="a" style="left:1037.6px;top:458.6px;width:0.6px;height:13.6px;background:#383838;"></div>
<div class="a" style="left:1061.6px;top:458.6px;width:0.6px;height:13.6px;background:#383838;"></div>
<div class="t" style="left:956px;top:462.48px;font-size:5.2px;line-height:6.24px;color:#a4a4a4;transform:translateX(-50%);">变换</div>
<div class="t" style="left:973.6px;top:462.48px;font-size:5.2px;line-height:6.24px;color:#a4a4a4;transform:translateX(-50%);">对齐</div>
<div class="t" style="left:992.6px;top:462.48px;font-size:5.2px;line-height:6.24px;color:#a4a4a4;transform:translateX(-50%);">路径查</div>
<div class="t" style="left:1012px;top:462.12px;font-size:5.8px;line-height:6.96px;color:#a4a4a4;transform:translateX(-50%);">Oper</div>
<div class="t" style="left:1029.6px;top:462.48px;font-size:5.2px;line-height:6.24px;color:#a4a4a4;transform:translateX(-50%);">描边</div>
<div class="t" style="left:1051.4px;top:462.48px;font-size:5.2px;line-height:6.24px;color:#f0f0f0;transform:translateX(-50%);">段落</div>
<div class="t" style="left:1039.2px;top:462.64px;font-size:4.6px;line-height:5.52px;color:#999;">⁝</div>
<div class="a" style="left:1073.6px;top:464.0px;width:4.6px;height:0.8px;background:#a8a8a8;"></div>
<div class="a" style="left:1073.6px;top:465.5px;width:4.6px;height:0.8px;background:#a8a8a8;"></div>
<div class="a" style="left:1073.6px;top:467.0px;width:4.6px;height:0.8px;background:#a8a8a8;"></div>
<div class="a" style="left:945.8px;top:472.2px;width:134.2px;height:114.8px;background:#4d4d4c;"></div>
<div class="a" style="left:988px;top:476.4px;width:12.4px;height:12px;background:#2a2a2a;border-radius:1px"></div>
<div class="a" style="left:952.2px;top:478.5px;width:8.2px;height:1.0px;background:#b0b0b0;"></div><div class="a" style="left:952.2px;top:479.8px;width:6px;height:1.0px;background:#b0b0b0;"></div><div class="a" style="left:952.2px;top:481.1px;width:8.2px;height:1.0px;background:#b0b0b0;"></div><div class="a" style="left:952.2px;top:482.4px;width:6px;height:1.0px;background:#b0b0b0;"></div><div class="a" style="left:952.2px;top:483.7px;width:8.2px;height:1.0px;background:#b0b0b0;"></div><div class="a" style="left:952.2px;top:485.0px;width:6px;height:1.0px;background:#b0b0b0;"></div>
<div class="a" style="left:971.4px;top:478.5px;width:8.2px;height:1.0px;background:#b0b0b0;"></div><div class="a" style="left:972.5px;top:479.8px;width:6px;height:1.0px;background:#b0b0b0;"></div><div class="a" style="left:971.4px;top:481.1px;width:8.2px;height:1.0px;background:#b0b0b0;"></div><div class="a" style="left:972.5px;top:482.4px;width:6px;height:1.0px;background:#b0b0b0;"></div><div class="a" style="left:971.4px;top:483.7px;width:8.2px;height:1.0px;background:#b0b0b0;"></div><div class="a" style="left:972.5px;top:485.0px;width:6px;height:1.0px;background:#b0b0b0;"></div>
<div class="a" style="left:990.3px;top:478.5px;width:8.2px;height:1.0px;background:#e4e4e4;"></div><div class="a" style="left:992.5px;top:479.8px;width:6px;height:1.0px;background:#e4e4e4;"></div><div class="a" style="left:990.3px;top:481.1px;width:8.2px;height:1.0px;background:#e4e4e4;"></div><div class="a" style="left:992.5px;top:482.4px;width:6px;height:1.0px;background:#e4e4e4;"></div><div class="a" style="left:990.3px;top:483.7px;width:8.2px;height:1.0px;background:#e4e4e4;"></div><div class="a" style="left:992.5px;top:485.0px;width:6px;height:1.0px;background:#e4e4e4;"></div>
<div class="a" style="left:1009.2px;top:478.5px;width:8.2px;height:1.0px;background:#8a8a8a;"></div><div class="a" style="left:1009.2px;top:479.8px;width:8.2px;height:1.0px;background:#8a8a8a;"></div><div class="a" style="left:1009.2px;top:481.1px;width:8.2px;height:1.0px;background:#8a8a8a;"></div><div class="a" style="left:1009.2px;top:482.4px;width:8.2px;height:1.0px;background:#8a8a8a;"></div><div class="a" style="left:1009.2px;top:483.7px;width:8.2px;height:1.0px;background:#8a8a8a;"></div><div class="a" style="left:1009.2px;top:485.0px;width:5px;height:1.0px;background:#8a8a8a;"></div>
<div class="a" style="left:1028.1px;top:478.5px;width:8.2px;height:1.0px;background:#8a8a8a;"></div><div class="a" style="left:1028.1px;top:479.8px;width:8.2px;height:1.0px;background:#8a8a8a;"></div><div class="a" style="left:1028.1px;top:481.1px;width:8.2px;height:1.0px;background:#8a8a8a;"></div><div class="a" style="left:1028.1px;top:482.4px;width:8.2px;height:1.0px;background:#8a8a8a;"></div><div class="a" style="left:1028.1px;top:483.7px;width:8.2px;height:1.0px;background:#8a8a8a;"></div><div class="a" style="left:1029.7px;top:485.0px;width:5px;height:1.0px;background:#8a8a8a;"></div>
<div class="a" style="left:1047.0px;top:478.5px;width:8.2px;height:1.0px;background:#8a8a8a;"></div><div class="a" style="left:1047.0px;top:479.8px;width:8.2px;height:1.0px;background:#8a8a8a;"></div><div class="a" style="left:1047.0px;top:481.1px;width:8.2px;height:1.0px;background:#8a8a8a;"></div><div class="a" style="left:1047.0px;top:482.4px;width:8.2px;height:1.0px;background:#8a8a8a;"></div><div class="a" style="left:1047.0px;top:483.7px;width:8.2px;height:1.0px;background:#8a8a8a;"></div><div class="a" style="left:1050.2px;top:485.0px;width:5px;height:1.0px;background:#8a8a8a;"></div>
<div class="a" style="left:1065.9px;top:478.5px;width:8.2px;height:1.0px;background:#8a8a8a;"></div><div class="a" style="left:1065.9px;top:479.8px;width:8.2px;height:1.0px;background:#8a8a8a;"></div><div class="a" style="left:1065.9px;top:481.1px;width:8.2px;height:1.0px;background:#8a8a8a;"></div><div class="a" style="left:1065.9px;top:482.4px;width:8.2px;height:1.0px;background:#8a8a8a;"></div><div class="a" style="left:1065.9px;top:483.7px;width:8.2px;height:1.0px;background:#8a8a8a;"></div><div class="a" style="left:1065.9px;top:485.0px;width:8.2px;height:1.0px;background:#8a8a8a;"></div>
<div class="a" style="left:952.6px;top:498.59999999999997px;width:0.9px;height:5.2px;background:#d0d0d0;"></div><div class="a" style="left:954.2px;top:498.59999999999997px;width:3.4px;height:0.9px;background:#bdbdbd;"></div><div class="a" style="left:954.2px;top:500.09999999999997px;width:3.4px;height:0.9px;background:#bdbdbd;"></div><div class="a" style="left:954.2px;top:501.59999999999997px;width:3.4px;height:0.9px;background:#bdbdbd;"></div><div class="a" style="left:954.2px;top:503.09999999999997px;width:3.4px;height:0.9px;background:#bdbdbd;"></div><div class="a" style="left:950.0px;top:500.8px;width:2.4px;height:0.8px;background:#d0d0d0;"></div>
<div class="a" style="left:960.2px;top:496.59999999999997px;width:7.6px;height:9.2px;background:#414141;border-radius:0.800px"></div>
<svg class="a" style="left:961.9px;top:497.0px" width="4.200" height="8.400" viewBox="0 0 8 16"><path d="M1 6 L4 2.500 L7 6 M1 10 L4 13.500 L7 10" fill="none" stroke="#d4d4d4" stroke-width="1.500"/></svg>
<div class="a" style="left:969.8px;top:496.59999999999997px;width:36px;height:9.2px;background:#3f3f3f;border-radius:0.800px"></div><div class="t" style="left:971.1999999999999px;top:495.86px;font-size:7.4px;line-height:8.88px;color:#dcdcdc;">0 pt</div>
<div class="a" style="left:1025px;top:498.59999999999997px;width:0.9px;height:5.2px;background:#d0d0d0;"></div><div class="a" style="left:1026.6px;top:498.59999999999997px;width:3.4px;height:0.9px;background:#bdbdbd;"></div><div class="a" style="left:1026.6px;top:500.09999999999997px;width:3.4px;height:0.9px;background:#bdbdbd;"></div><div class="a" style="left:1026.6px;top:501.59999999999997px;width:3.4px;height:0.9px;background:#bdbdbd;"></div><div class="a" style="left:1026.6px;top:503.09999999999997px;width:3.4px;height:0.9px;background:#bdbdbd;"></div><div class="a" style="left:1022.4px;top:500.8px;width:2.4px;height:0.8px;background:#d0d0d0;"></div>
<div class="a" style="left:1033.2px;top:496.59999999999997px;width:7.2px;height:9.2px;background:#414141;border-radius:0.800px"></div>
<svg class="a" style="left:1034.7px;top:497.0px" width="4.200" height="8.400" viewBox="0 0 8 16"><path d="M1 6 L4 2.500 L7 6 M1 10 L4 13.500 L7 10" fill="none" stroke="#d4d4d4" stroke-width="1.500"/></svg>
<div class="a" style="left:1042.2px;top:496.59999999999997px;width:36px;height:9.2px;background:#3f3f3f;border-radius:0.800px"></div><div class="t" style="left:1043.6000000000001px;top:495.86px;font-size:7.4px;line-height:8.88px;color:#dcdcdc;">0 pt</div>
<div class="a" style="left:952.6px;top:512.4px;width:0.9px;height:5.2px;background:#d0d0d0;"></div><div class="a" style="left:954.2px;top:512.4px;width:3.4px;height:0.9px;background:#bdbdbd;"></div><div class="a" style="left:954.2px;top:513.9px;width:3.4px;height:0.9px;background:#bdbdbd;"></div><div class="a" style="left:954.2px;top:515.4px;width:3.4px;height:0.9px;background:#bdbdbd;"></div><div class="a" style="left:954.2px;top:516.9px;width:3.4px;height:0.9px;background:#bdbdbd;"></div><div class="a" style="left:950.0px;top:514.6px;width:2.4px;height:0.8px;background:#d0d0d0;"></div>
<div class="a" style="left:960.2px;top:510.4px;width:7.6px;height:9.2px;background:#414141;border-radius:0.800px"></div>
<svg class="a" style="left:961.9px;top:510.8px" width="4.200" height="8.400" viewBox="0 0 8 16"><path d="M1 6 L4 2.500 L7 6 M1 10 L4 13.500 L7 10" fill="none" stroke="#d4d4d4" stroke-width="1.500"/></svg>
<div class="a" style="left:969.8px;top:510.4px;width:36px;height:9.2px;background:#3f3f3f;border-radius:0.800px"></div><div class="t" style="left:971.1999999999999px;top:509.66px;font-size:7.4px;line-height:8.88px;color:#dcdcdc;">0 pt</div>
<div class="a" style="left:952.6px;top:529.5px;width:0.9px;height:5.2px;background:#d0d0d0;"></div><div class="a" style="left:954.2px;top:529.5px;width:3.4px;height:0.9px;background:#bdbdbd;"></div><div class="a" style="left:954.2px;top:531.0px;width:3.4px;height:0.9px;background:#bdbdbd;"></div><div class="a" style="left:954.2px;top:532.5px;width:3.4px;height:0.9px;background:#bdbdbd;"></div><div class="a" style="left:954.2px;top:534.0px;width:3.4px;height:0.9px;background:#bdbdbd;"></div><div class="a" style="left:950.0px;top:531.7px;width:2.4px;height:0.8px;background:#d0d0d0;"></div>
<div class="a" style="left:960.2px;top:527.5px;width:7.6px;height:9.2px;background:#414141;border-radius:0.800px"></div>
<svg class="a" style="left:961.9px;top:527.9px" width="4.200" height="8.400" viewBox="0 0 8 16"><path d="M1 6 L4 2.500 L7 6 M1 10 L4 13.500 L7 10" fill="none" stroke="#d4d4d4" stroke-width="1.500"/></svg>
<div class="a" style="left:969.8px;top:527.5px;width:36px;height:9.2px;background:#3f3f3f;border-radius:0.800px"></div><div class="t" style="left:971.1999999999999px;top:526.76px;font-size:7.4px;line-height:8.88px;color:#dcdcdc;">0 pt</div>
<div class="a" style="left:1025px;top:529.5px;width:0.9px;height:5.2px;background:#d0d0d0;"></div><div class="a" style="left:1026.6px;top:529.5px;width:3.4px;height:0.9px;background:#bdbdbd;"></div><div class="a" style="left:1026.6px;top:531.0px;width:3.4px;height:0.9px;background:#bdbdbd;"></div><div class="a" style="left:1026.6px;top:532.5px;width:3.4px;height:0.9px;background:#bdbdbd;"></div><div class="a" style="left:1026.6px;top:534.0px;width:3.4px;height:0.9px;background:#bdbdbd;"></div><div class="a" style="left:1022.4px;top:531.7px;width:2.4px;height:0.8px;background:#d0d0d0;"></div>
<div class="a" style="left:1033.2px;top:527.5px;width:7.2px;height:9.2px;background:#414141;border-radius:0.800px"></div>
<svg class="a" style="left:1034.7px;top:527.9px" width="4.200" height="8.400" viewBox="0 0 8 16"><path d="M1 6 L4 2.500 L7 6 M1 10 L4 13.500 L7 10" fill="none" stroke="#d4d4d4" stroke-width="1.500"/></svg>
<div class="a" style="left:1042.2px;top:527.5px;width:36px;height:9.2px;background:#3f3f3f;border-radius:0.800px"></div><div class="t" style="left:1043.6000000000001px;top:526.76px;font-size:7.4px;line-height:8.88px;color:#dcdcdc;">0 pt</div>
<div class="t" style="left:985px;top:546.22px;font-size:6.3px;line-height:7.56px;color:#d4d4d4;transform:translateX(-100%)">避头尾集:</div>
<div class="a" style="left:987px;top:545.4px;width:93px;height:9.2px;background:#3f3f3f;border-radius:0.800px"></div><div class="t" style="left:988.4px;top:546.48px;font-size:6.2px;line-height:7.44px;color:#dcdcdc;">无</div>
<svg class="a" style="left:1072.3px;top:548.725px" width="3.4" height="2.55" viewBox="0 0 8 6"><path d="M0.600 1 L4 5 L7.400 1" fill="none" stroke="#dcdcdc" stroke-width="1.400"/></svg>
<div class="t" style="left:985px;top:559.82px;font-size:6.3px;line-height:7.56px;color:#d4d4d4;transform:translateX(-100%)">标点挤压集:</div>
<div class="a" style="left:987px;top:559.0px;width:93px;height:9.2px;background:#3f3f3f;border-radius:0.800px"></div><div class="t" style="left:988.4px;top:560.08px;font-size:6.2px;line-height:7.44px;color:#dcdcdc;">无</div>
<svg class="a" style="left:1072.3px;top:562.325px" width="3.4" height="2.55" viewBox="0 0 8 6"><path d="M0.600 1 L4 5 L7.400 1" fill="none" stroke="#dcdcdc" stroke-width="1.400"/></svg>
<div class="a" style="left:948.6px;top:576.6px;width:5.6px;height:5.6px;background:#e6e6e6;border-radius:0.800px"></div>
<svg class="a" style="left:949.400px;top:577.400px" width="4" height="4" viewBox="0 0 8 8"><path d="M1 4.200 L3.200 6.400 L7 1.500" fill="none" stroke="#333" stroke-width="1.600"/></svg>
<div class="t" style="left:957.8px;top:575.78px;font-size:6.7px;line-height:8.04px;color:#dcdcdc;">连字</div>
<!-- s_status -->
<div class="a" style="left:36.6px;top:578px;width:899.2px;height:8.8px;background:#4a4a4a;"></div>
<div class="a" style="left:36.6px;top:578px;width:236px;height:8.8px;background:#424242;"></div>
<div class="a" style="left:39px;top:578.6px;width:25px;height:7.2px;background:#3c3c3c;"></div>
<div class="t" style="left:40.2px;top:578.62px;font-size:6.3px;line-height:7.56px;color:#e2e2e2;">66.67%</div>
<svg class="a" style="left:67.89999999999999px;top:581.525px" width="3.4" height="2.55" viewBox="0 0 8 6"><path d="M0.600 1 L4 5 L7.400 1" fill="none" stroke="#d0d0d0" stroke-width="1.400"/></svg>
<div class="t" style="left:78.6px;top:580.34px;font-size:3.6px;line-height:4.32px;color:#6a6a6a;font-family:'DejaVu Sans',sans-serif">|◀</div>
<div class="t" style="left:88.8px;top:580.34px;font-size:3.6px;line-height:4.32px;color:#6a6a6a;font-family:'DejaVu Sans',sans-serif">◀</div>
<div class="t" style="left:132.4px;top:580.34px;font-size:3.6px;line-height:4.32px;color:#6a6a6a;font-family:'DejaVu Sans',sans-serif">▶</div>
<div class="t" style="left:140.8px;top:580.34px;font-size:3.6px;line-height:4.32px;color:#6a6a6a;font-family:'DejaVu Sans',sans-serif">▶|</div>
<div class="a" style="left:97.4px;top:578.6px;width:20.6px;height:7.2px;background:#3a3a3a;"></div>
<div class="t" style="left:99px;top:578.62px;font-size:6.3px;line-height:7.56px;color:#e2e2e2;">1</div>
<svg class="a" style="left:120.89999999999999px;top:581.525px" width="3.4" height="2.55" viewBox="0 0 8 6"><path d="M0.600 1 L4 5 L7.400 1" fill="none" stroke="#d0d0d0" stroke-width="1.400"/></svg>
<div class="t" style="left:202.8px;top:579.12px;font-size:5.8px;line-height:6.96px;color:#a8a8a8;transform:translateX(-50%);">选择</div>
<div class="t" style="left:258.6px;top:580.22px;font-size:3.8px;line-height:4.56px;color:#e0e0e0;font-family:'DejaVu Sans',sans-serif">▶</div>
<svg class="a" style="left:268.40000000000003px;top:580.9px" width="2.4000000000000004" height="3.2" viewBox="0 0 6 8"><path d="M5 0.600 L1 4 L5 7.400" fill="none" stroke="#8c8c8c" stroke-width="1.400"/></svg>
<div class="a" style="left:598px;top:580.4px;width:12px;height:4.8px;background:#5c5c5c;border-radius:2.400px"></div>
<svg class="a" style="left:929.8px;top:581.0px" width="2.4000000000000004" height="3.2" viewBox="0 0 6 8"><path d="M1 0.600 L5 4 L1 7.400" fill="none" stroke="#aaa" stroke-width="1.400"/></svg>
<div class="a" style="left:935.8px;top:578px;width:8.4px;height:8.8px;background:#4a4a4a;"></div>
<!-- s_dock -->
<div class="a" style="left:376.4px;top:587.3px;width:327.6px;height:24px;background:#d2bfd5;border-radius:2.500px 2.500px 0 0;box-shadow:0 0 0 0.400px rgba(255,255,255,.3)"></div>
<div class="a" style="left:378.5px;top:589.5px;width:14.6px;height:14.6px;background:linear-gradient(90deg,#2f8bf0 0 50%,#e9edf3 50% 100%);border-radius:2.500px"><div class="a" style="left:3.400px;top:4px;width:0.900px;height:2.400px;background:#123"></div><div class="a" style="left:10.400px;top:4px;width:0.900px;height:2.400px;background:#123"></div><div class="a" style="left:3.500px;top:8.500px;width:8px;height:3px;border-bottom:0.900px solid #123;border-radius:0 0 50% 50%"></div></div>
<div class="a" style="left:396.7px;top:589.5px;width:14.6px;height:14.6px;background:radial-gradient(circle at 50% 40%,#b9bdc2,#7e838a);border-radius:50%"><svg class="a" style="left:3px;top:3px" width="9" height="9" viewBox="0 0 18 18"><path d="M15.500 2.500 C10 2.500 6.500 6 5 10.500 L7.500 13 C12 11.500 15.500 8 15.500 2.500z" fill="#3c4046"/><path d="M4.500 11 L2 13 L5 13.500 L5.500 16 L7.500 13.500z" fill="#3c4046"/></svg></div>
<div class="a" style="left:415.2px;top:589.5px;width:14.6px;height:14.6px;background:conic-gradient(from 10deg,#d04bd0,#f04e5a,#f5822a,#f0c030,#58c84a,#2bb4c8,#2b8ee8,#6a5ee0,#d04bd0);border-radius:50%"><div class="a" style="left:5.500px;top:5.500px;width:4px;height:4px;background:#fff;border-radius:50%"></div></div>
<div class="a" style="left:433.5px;top:589.5px;width:14.6px;height:14.6px;background:linear-gradient(180deg,#2fa9f7,#1a6ee8);border-radius:50%"><svg class="a" style="left:3px;top:3px" width="9" height="9" viewBox="0 0 18 18"><path d="M9 3 L4 14 M9 3 L14 14 M2.500 11 H15.500" stroke="#fff" stroke-width="1.800" fill="none" stroke-linecap="round"/></svg></div>
<div class="a" style="left:444.6px;top:588px;width:5.6px;height:5.6px;background:#e8473f;border-radius:50%"><div class="t" style="left:1.700px;top:0.700px;font-size:3.600px;color:#fff">2</div></div>
<div class="a" style="left:451.7px;top:589.5px;width:14.6px;height:14.6px;background:linear-gradient(180deg,#8e9196,#5d6066);border-radius:3px"><div class="a" style="left:2.500px;top:2.500px;width:10px;height:10px;border-radius:50%;border:1.800px solid #2f3135;background:#9da0a5"></div><div class="a" style="left:6px;top:6px;width:3px;height:3px;border-radius:50%;background:#2f3135"></div></div>
<div class="a" style="left:462.8px;top:588px;width:5.6px;height:5.6px;background:#e8473f;border-radius:50%"><div class="t" style="left:1.700px;top:0.700px;font-size:3.600px;color:#fff">1</div></div>
<div class="a" style="left:469.4px;top:589.5px;width:14.6px;height:14.6px;background:#2b1402;border:0.700px solid #9c5a10;border-radius:0.800px"></div>
<div class="t" style="left:476.7px;top:591.56px;font-size:8.4px;line-height:10.08px;color:#f79a1d;font-weight:700;transform:translateX(-50%);">Ai</div>
<div class="a" style="left:488.5px;top:590.0px;width:13.0px;height:13.6px;background:#fdfcf6;border-radius:1.500px"><div class="a" style="left:0;top:0;width:13.400px;height:3px;background:#f6d24a;border-radius:1.500px 1.500px 0 0"></div></div>
<div class="a" style="left:507.59999999999997px;top:590.1px;width:10.6px;height:13.4px;background:#fbfbfb;border-radius:0.800px"><div class="a" style="left:1.400px;top:2.600px;width:5px;height:4px;background:#4a86c8"></div><div class="a" style="left:1.400px;top:8px;width:7px;height:0.800px;background:#bbb"></div><div class="a" style="left:1.400px;top:10px;width:7px;height:0.800px;background:#bbb"></div></div>
<div class="a" style="left:517.4px;top:589px;width:2.2px;height:13px;background:#f08a24;transform:rotate(22deg);border-radius:1px"></div>
<div class="a" style="left:525.4000000000001px;top:590.3px;width:12.6px;height:7.4px;background:#3f8fe8;border-radius:0.800px;border:0.800px solid #d8e6f5"><div class="a" style="left:2.500px;top:1.400px;width:6.500px;height:3px;background:#cfe2f7"></div></div>
<div class="a" style="left:531px;top:597px;width:1.4px;height:6px;background:#b9d3ee;"></div>
<div class="a" style="left:528.6px;top:602.6px;width:6.2px;height:1.2px;background:#9dbfe4;border-radius:0.600px"></div>
<div class="a" style="left:542.7px;top:589.5px;width:14.6px;height:14.6px;background:#0a2436;border:0.700px solid #2f7fae;border-radius:0.800px"></div>
<div class="t" style="left:550px;top:591.68px;font-size:8.2px;line-height:9.84px;color:#56c4f8;transform:translateX(-50%);">Ps</div>
<div class="a" style="left:560.6px;top:590.6px;width:10.4px;height:8.6px;background:#5ed04f;border-radius:50%"></div>
<div class="a" style="left:566.4px;top:594.8px;width:9.2px;height:7.6px;background:#f1f1f1;border-radius:50%"></div>
<div class="a" style="left:581.6px;top:588.8px;width:10.2px;height:14.6px;background:#1b1b1b;border-radius:50% 50% 46% 46%"></div>
<div class="a" style="left:583.4px;top:593.6px;width:6.6px;height:8.6px;background:#fafafa;border-radius:45%"></div>
<div class="a" style="left:582.2px;top:595px;width:9px;height:2.6px;background:#e3362c;border-radius:1.200px"></div>
<div class="a" style="left:584px;top:602px;width:2.8px;height:1.8px;background:#f2a21b;border-radius:50%"></div>
<div class="a" style="left:586.8px;top:602px;width:2.8px;height:1.8px;background:#f2a21b;border-radius:50%"></div>
<div class="a" style="left:599.4px;top:589.6px;width:0.6px;height:13.6px;background:rgba(130,115,135,.55);"></div>
<div class="a" style="left:604.7px;top:589.0px;width:15.6px;height:15.6px;background:#f7d433;border-radius:50%"><svg class="a" style="left:3.500px;top:2px" width="9" height="12" viewBox="0 0 9 12"><path d="M3.300 9 V1 L8 2.500 V4.500 L4.500 3.400 V9.500" fill="none" stroke="#2fba6a" stroke-width="1.500"/><ellipse cx="2.800" cy="9.500" rx="2.600" ry="2" fill="#2fba6a"/></svg></div>
<div class="a" style="left:623.5px;top:589.5px;width:14.6px;height:14.6px;background:#f7f7f7;border-radius:50%"></div>
<div class="a" style="left:630px;top:590.4px;width:2.6px;height:11px;background:#222;transform:rotate(38deg);border-radius:0.600px 0.600px 1.300px 1.300px"></div>
<div class="a" style="left:641.7px;top:589.5px;width:14.6px;height:14.6px;background:#dd2a2a;border-radius:3.400px"><div class="a" style="left:3.400px;top:4.200px;width:8px;height:8px;border-radius:50%;border:1.300px solid #fff"></div><div class="a" style="left:6px;top:6.800px;width:3px;height:3px;border-radius:50%;border:1px solid #fff"></div><div class="a" style="left:7.800px;top:2.400px;width:1.100px;height:5.500px;background:#fff"></div></div>
<div class="a" style="left:662.4px;top:589.6px;width:0.6px;height:13.6px;background:rgba(130,115,135,.55);"></div>
<div class="a" style="left:668.9px;top:591.5px;width:13.799999999999999px;height:10.6px;background:#f4f4f4;border:0.600px solid #666"><div class="a" style="left:0;top:0;width:100%;height:2.400px;background:#222"></div><div class="a" style="left:0;bottom:0;width:100%;height:2.400px;background:#222"></div></div>
<div class="a" style="left:688.6px;top:590.2px;width:11px;height:13px;background:linear-gradient(90deg,#dcdcdc,#f8f8f8 50%,#cfcfcf);border-radius:1px 1px 2.500px 2.500px;opacity:.92"></div>
<div class="a" style="left:688px;top:589.2px;width:12.2px;height:1.6px;background:#e9e9e9;border-radius:0.800px"></div>
<div class="a" style="left:385.2px;top:606.4px;width:1.2px;height:1.2px;background:#2a2a2a;border-radius:50%"></div>
<div class="a" style="left:421.9px;top:606.4px;width:1.2px;height:1.2px;background:#2a2a2a;border-radius:50%"></div>
<div class="a" style="left:476.09999999999997px;top:606.4px;width:1.2px;height:1.2px;background:#2a2a2a;border-radius:50%"></div>
<div class="a" style="left:567.6999999999999px;top:606.4px;width:1.2px;height:1.2px;background:#2a2a2a;border-radius:50%"></div>
<div class="a" style="left:630.1999999999999px;top:606.4px;width:1.2px;height:1.2px;background:#2a2a2a;border-radius:50%"></div>
<div class="a" style="left:648.4px;top:606.4px;width:1.2px;height:1.2px;background:#2a2a2a;border-radius:50%"></div>
</div></body></html>
